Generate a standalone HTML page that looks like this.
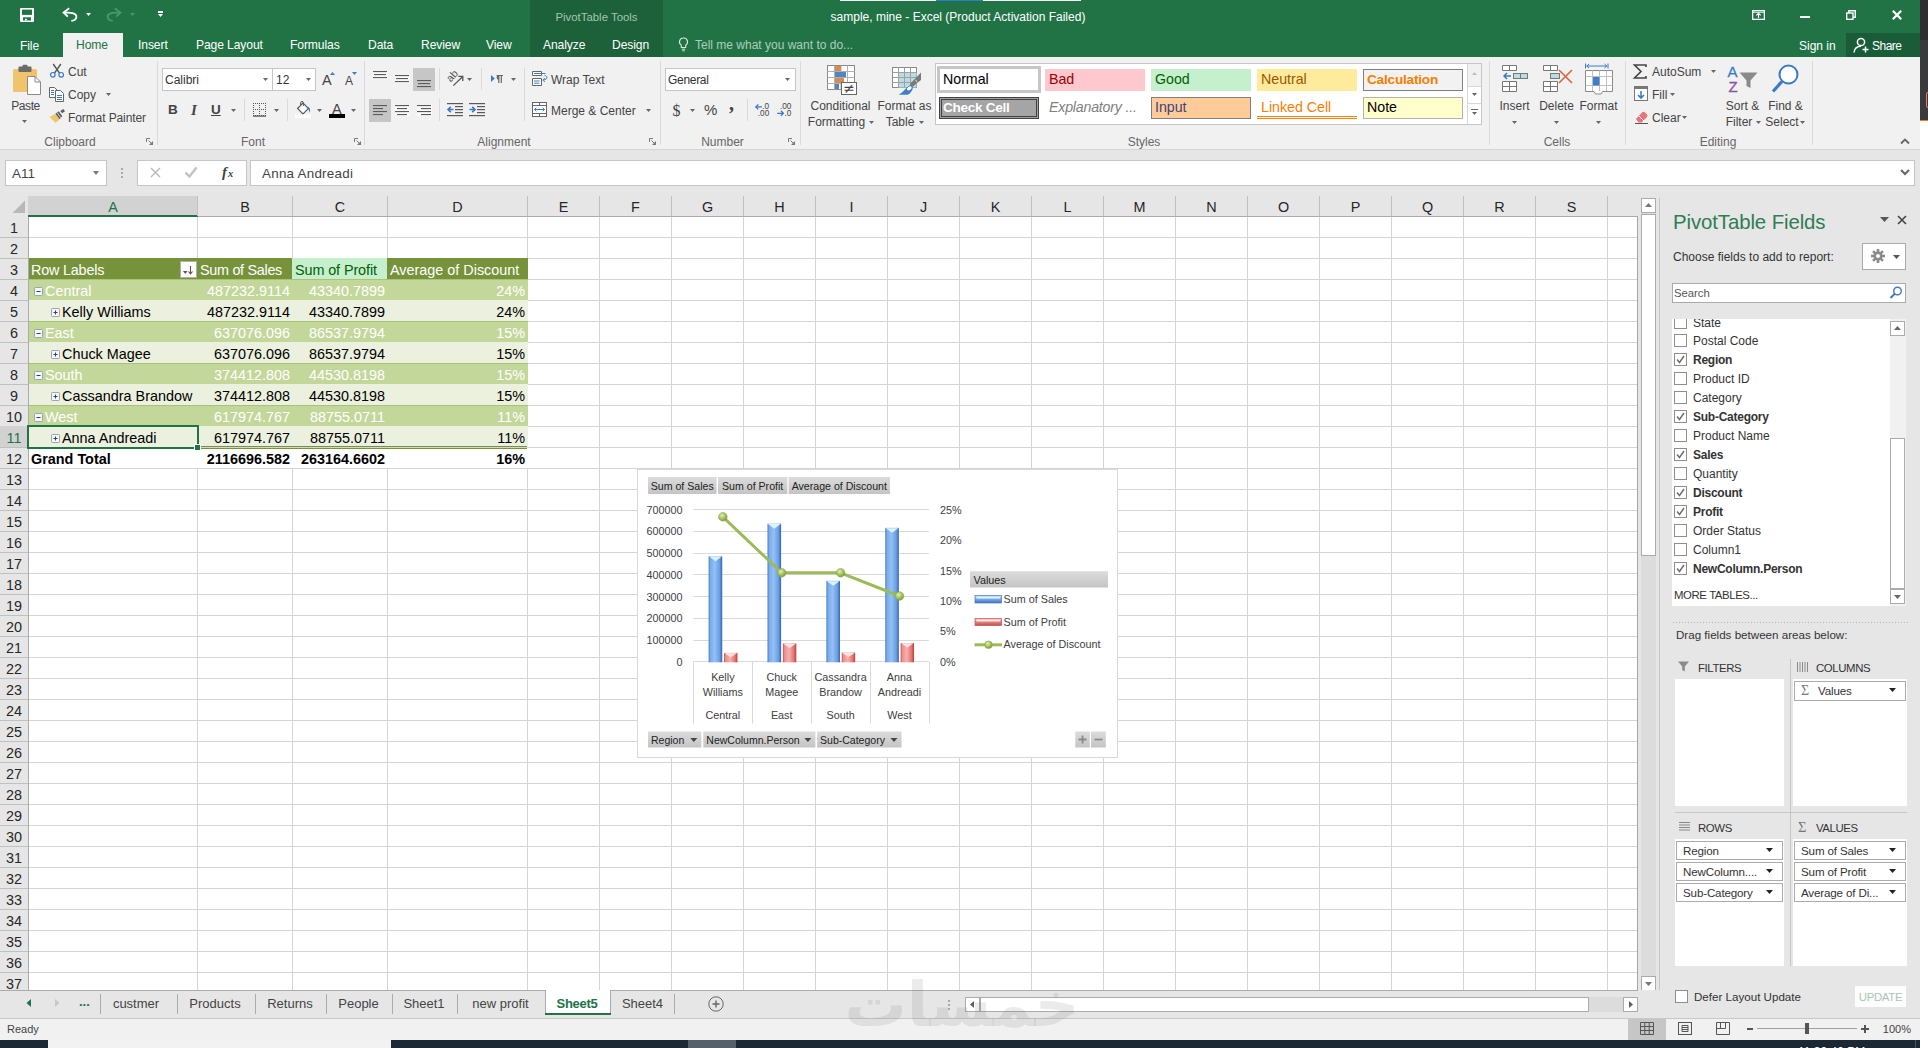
<!DOCTYPE html>
<html><head><meta charset="utf-8"><title>sample, mine - Excel</title><style>
html,body{margin:0;padding:0}
body{width:1928px;height:1048px;overflow:hidden;background:#fff;position:relative;font-family:"Liberation Sans",sans-serif}
div,svg,span.a{position:absolute;box-sizing:border-box}
svg{overflow:visible}
.t{white-space:pre;color:#444}
.c{white-space:pre;font-size:14.4px;line-height:21px;height:21px;color:#000}
.b{font-weight:bold}
</style></head><body>
<div style="left:0px;top:0px;width:1920px;height:57px;background:#217346;"></div>
<div style="left:530px;top:0px;width:133px;height:57px;background:#1c6139;"></div>
<div style="left:840px;top:0px;width:241px;height:1px;background:#f4f7f5;"></div>
<div style="left:936px;top:0px;width:47px;height:1px;background:#2b7cd3;"></div>
<div class="t" style="top:9px;font-size:11.4px;line-height:16px;color:#a3c4b0;left:530.0px;width:133px;text-align:center;">PivotTable Tools</div>
<div class="t" style="top:9px;font-size:12px;line-height:16px;color:#fff;left:758.0px;width:400px;text-align:center;">sample, mine - Excel (Product Activation Failed)</div>
<svg style="left:20px;top:8px;" width="14" height="14" viewBox="0 0 14 14"><rect x="0" y="0" width="14" height="14" rx="1" fill="#fff"/><rect x="2" y="1.600" width="10" height="5.300" fill="#217346"/><rect x="3" y="9.300" width="8" height="3.200" fill="#217346"/><rect x="5" y="10.800" width="1.800" height="1.700" fill="#fff"/></svg>
<svg style="left:62px;top:7px;" width="16" height="15" viewBox="0 0 16 15"><path d="M2.500 5.800C8 5.300 14.600 5.800 14.400 10C14.200 12.600 11.500 13.600 9.300 13.900" fill="none" stroke="#fff" stroke-width="1.900"/><path d="M7.200 1.300L1.600 5.500L5.800 9.600" fill="none" stroke="#fff" stroke-width="1.900"/></svg>
<svg style="left:86px;top:13px;" width="5" height="3" viewBox="0 0 5 3"><path d="M0 0H5L2.5 3Z" fill="#fff"/></svg>
<svg style="left:106px;top:7px;" width="16" height="15" viewBox="0 0 16 15"><path d="M13.500 5.800C8 5.300 1.400 5.800 1.600 10C1.800 12.600 4.500 13.600 6.700 13.900" fill="none" stroke="#4f9470" stroke-width="1.900"/><path d="M8.800 1.300L14.400 5.500L10.200 9.600" fill="none" stroke="#4f9470" stroke-width="1.900"/></svg>
<svg style="left:130px;top:13px;" width="5" height="3" viewBox="0 0 5 3"><path d="M0 0H5L2.5 3Z" fill="#4f9470"/></svg>
<div style="left:158px;top:11px;width:5px;height:1.5px;background:#fff;"></div>
<svg style="left:158px;top:14px;" width="5" height="3" viewBox="0 0 5 3"><path d="M0 0H5L2.5 3Z" fill="#fff"/></svg>
<svg style="left:1752px;top:10px;" width="13" height="10" viewBox="0 0 13 10"><rect x="0.650" y="0.650" width="11.700" height="8.700" fill="none" stroke="#fff" stroke-width="1.300"/><path d="M6.500 8V3.600M4.300 5.400L6.500 3.300L8.700 5.400" stroke="#fff" stroke-width="1.200" fill="none"/><rect x="1" y="1.800" width="11" height="0.900" fill="#fff"/></svg>
<div style="left:1800px;top:16px;width:10px;height:2px;background:#fff;"></div>
<svg style="left:1846px;top:10px;" width="10" height="10" viewBox="0 0 10 10"><rect x="0.700" y="3" width="6.300" height="6.300" fill="none" stroke="#fff" stroke-width="1.400"/><path d="M2.800 3V0.700H9.300V7.200H7" fill="none" stroke="#fff" stroke-width="1.400"/></svg>
<svg style="left:1892px;top:10px;" width="10" height="10" viewBox="0 0 10 10"><path d="M0.800 0.800L9.200 9.200M9.200 0.800L0.800 9.200" stroke="#fff" stroke-width="2.200"/></svg>
<div style="left:63px;top:33px;width:60px;height:24px;background:#f1f1f1;"></div>
<div class="t tab" style="top:38px;font-size:12.1px;line-height:17px;color:#fff;left:20px;letter-spacing:-0.1px;">File</div>
<div class="t tab" style="top:37.3px;font-size:12.1px;line-height:17px;color:#217346;left:76px;letter-spacing:-0.1px;">Home</div>
<div class="t tab" style="top:37.3px;font-size:12.1px;line-height:17px;color:#fff;left:138px;letter-spacing:-0.1px;">Insert</div>
<div class="t tab" style="top:37.3px;font-size:12.1px;line-height:17px;color:#fff;left:196px;letter-spacing:-0.1px;">Page Layout</div>
<div class="t tab" style="top:37.3px;font-size:12.1px;line-height:17px;color:#fff;left:290px;letter-spacing:-0.1px;">Formulas</div>
<div class="t tab" style="top:37.3px;font-size:12.1px;line-height:17px;color:#fff;left:368px;letter-spacing:-0.1px;">Data</div>
<div class="t tab" style="top:37.3px;font-size:12.1px;line-height:17px;color:#fff;left:421px;letter-spacing:-0.1px;">Review</div>
<div class="t tab" style="top:37.3px;font-size:12.1px;line-height:17px;color:#fff;left:486px;letter-spacing:-0.1px;">View</div>
<div class="t tab" style="top:37.3px;font-size:12.1px;line-height:17px;color:#fff;left:543px;letter-spacing:-0.1px;">Analyze</div>
<div class="t tab" style="top:37.3px;font-size:12.1px;line-height:17px;color:#fff;left:612px;letter-spacing:-0.1px;">Design</div>
<svg style="left:678px;top:37px;" width="11" height="15" viewBox="0 0 11 15"><path d="M5.5 1A3.9 3.9 0 0 0 3.3 8.2V10.5H7.7V8.2A3.9 3.9 0 0 0 5.5 1Z" fill="none" stroke="#d5e6dc" stroke-width="1.1"/><path d="M3.8 12.2H7.2M4.3 13.8H6.7" stroke="#d5e6dc" stroke-width="1"/></svg>
<div class="t" style="top:37.3px;font-size:12px;line-height:17px;color:#aecdbb;left:695px;">Tell me what you want to do...</div>
<div class="t" style="top:38px;font-size:12px;line-height:17px;color:#fff;left:1799px;">Sign in</div>
<div style="left:1846px;top:33px;width:74px;height:24px;background:#1a5c38;"></div>
<svg style="left:1853px;top:37px;" width="17" height="16" viewBox="0 0 17 16"><circle cx="8" cy="5" r="3.6" fill="none" stroke="#fff" stroke-width="1.5"/><path d="M1 15.5C1.5 11 4.5 9.3 8 9.3" fill="none" stroke="#fff" stroke-width="1.5"/><path d="M12.5 9.5V15.5M9.5 12.5H15.5" stroke="#fff" stroke-width="1.5"/></svg>
<div class="t" style="top:38px;font-size:12px;line-height:17px;color:#fff;left:1872px;letter-spacing:-0.500px;">Share</div>
<div style="left:0px;top:57px;width:1920px;height:93px;background:#f1f1f1;"></div>
<div style="left:0px;top:149px;width:1920px;height:1px;background:#d5d5d5;"></div>
<svg style="left:12px;top:64px;" width="30" height="32" viewBox="0 0 30 32"><rect x="1" y="5" width="24" height="23" rx="1.5" fill="#f0c36d"/><rect x="6.5" y="2.5" width="13" height="5.5" rx="1" fill="#6b6b6b"/><rect x="10.5" y="0.8" width="5" height="3.5" rx="1.2" fill="#6b6b6b"/><path d="M15.5 12.5H23L28.5 18V30.5H15.5Z" fill="#fff" stroke="#8a8a8a" stroke-width="1"/><path d="M23 12.5V18H28.5" fill="none" stroke="#8a8a8a" stroke-width="1"/></svg>
<div class="t" style="top:98px;font-size:12px;line-height:16px;color:#444;left:-4.5px;width:60px;text-align:center;letter-spacing:-0.4px;">Paste</div>
<svg style="left:22px;top:120px;" width="5" height="3" viewBox="0 0 5 3"><path d="M0 0H5L2.5 3Z" fill="#666"/></svg>
<svg style="left:49px;top:63px;" width="16" height="15" viewBox="0 0 16 15"><path d="M4.2 1L10.5 10.2M11.8 1L5.5 10.2" stroke="#555" stroke-width="1.4" fill="none"/><circle cx="3.8" cy="11.8" r="2.3" fill="none" stroke="#3a7bc8" stroke-width="1.2"/><circle cx="12.2" cy="11.8" r="2.3" fill="none" stroke="#3a7bc8" stroke-width="1.2"/></svg>
<div class="t" style="top:64px;font-size:12px;line-height:16px;color:#444;left:68px;">Cut</div>
<svg style="left:49px;top:87px;" width="16" height="15" viewBox="0 0 16 15"><path d="M0.500 0.500H5.500L8 3V10.500H0.500Z" fill="#fff" stroke="#666" stroke-width="1"/><path d="M2 3.500H5M2 5.500H5M2 7.500H5" stroke="#3a7bc8" stroke-width="1" shape-rendering="crispEdges"/><path d="M6.500 3.500H11.500L14.500 6.500V14.500H6.500Z" fill="#fff" stroke="#666" stroke-width="1"/><path d="M8 8.500H13M8 10.500H13M8 12.500H13" stroke="#3a7bc8" stroke-width="1" shape-rendering="crispEdges"/></svg>
<div class="t" style="top:87px;font-size:12px;line-height:16px;color:#444;left:68px;">Copy</div>
<svg style="left:106px;top:93px;" width="5" height="3" viewBox="0 0 5 3"><path d="M0 0H5L2.5 3Z" fill="#666"/></svg>
<svg style="left:49px;top:109px;" width="17" height="15" viewBox="0 0 17 15"><path d="M0.500 8L6 5L10.500 10.500L6.500 14Z" fill="#f0c36d"/><path d="M6.300 4.700L9.800 2.300L13.300 7.300L10.600 10.200Z" fill="#5e5e5e"/><path d="M8 3.600L12 9" stroke="#f1f1f1" stroke-width="0.800"/><path d="M11.300 2L14.300 0L16 2.200L13 4.300Z" fill="#5e5e5e"/></svg>
<div class="t" style="top:110px;font-size:12px;line-height:16px;color:#444;left:68px;letter-spacing:-0.1px;">Format Painter</div>
<div class="t" style="top:134px;font-size:12px;line-height:16px;color:#666;left:20.0px;width:100px;text-align:center;">Clipboard</div>
<svg style="left:146px;top:138px;" width="7" height="7" viewBox="0 0 7 7"><path d="M0.500 4V0.500H4" fill="none" stroke="#777" stroke-width="1"/><path d="M2.500 2.500L5.500 5.500" fill="none" stroke="#777" stroke-width="1"/><path d="M7 3V7H3Z" fill="#777"/></svg>
<div style="left:157px;top:61px;width:1px;height:84px;background:#dadada;"></div>
<div style="left:162px;top:68px;width:111px;height:23px;background:#fff;border:1px solid #c6c6c6;"></div>
<div style="left:272px;top:68px;width:44px;height:23px;background:#fff;border:1px solid #c6c6c6;"></div>
<div class="t" style="top:72px;font-size:12px;line-height:16px;color:#333;left:165px;">Calibri</div>
<svg style="left:263px;top:78px;" width="5" height="3" viewBox="0 0 5 3"><path d="M0 0H5L2.5 3Z" fill="#666"/></svg>
<div class="t" style="top:72px;font-size:12px;line-height:16px;color:#333;left:276px;">12</div>
<svg style="left:306px;top:78px;" width="5" height="3" viewBox="0 0 5 3"><path d="M0 0H5L2.5 3Z" fill="#666"/></svg>
<div class="t" style="top:71px;font-size:14.5px;line-height:18px;color:#444;left:322px;">A</div>
<svg style="left:330px;top:72px;" width="5" height="3" viewBox="0 0 5 3"><path d="M0 3H5L2.5 0Z" fill="#3a7bc8"/></svg>
<div class="t" style="top:73px;font-size:12px;line-height:16px;color:#444;left:345px;">A</div>
<svg style="left:352px;top:72px;" width="5" height="3" viewBox="0 0 5 3"><path d="M0 0H5L2.5 3Z" fill="#3a7bc8"/></svg>
<div class="t" style="top:101px;font-size:13.5px;line-height:18px;color:#444;left:168px;font-weight:bold;">B</div>
<div class="t" style="top:101px;font-size:13.5px;line-height:18px;color:#444;left:191px;font-style:italic;font-weight:bold;font-family:'Liberation Serif',serif;font-size:15px;">I</div>
<div class="t" style="top:101px;font-size:13.5px;line-height:18px;color:#444;left:211px;font-weight:bold;text-decoration:underline;">U</div>
<svg style="left:231px;top:109px;" width="5" height="3" viewBox="0 0 5 3"><path d="M0 0H5L2.5 3Z" fill="#666"/></svg>
<div style="left:244px;top:99px;width:1px;height:22px;background:#dadada;"></div>
<svg style="left:253px;top:103px;" width="13" height="14" viewBox="0 0 13 14"><g fill="#555" shape-rendering="crispEdges"><rect x="0" y="0" width="1" height="1"/><rect x="0" y="6" width="1" height="1"/><rect x="0" y="12" width="1" height="1"/><rect x="2" y="0" width="1" height="1"/><rect x="0" y="2" width="1" height="1"/><rect x="2" y="6" width="1" height="1"/><rect x="6" y="2" width="1" height="1"/><rect x="2" y="12" width="1" height="1"/><rect x="12" y="2" width="1" height="1"/><rect x="4" y="0" width="1" height="1"/><rect x="0" y="4" width="1" height="1"/><rect x="4" y="6" width="1" height="1"/><rect x="6" y="4" width="1" height="1"/><rect x="4" y="12" width="1" height="1"/><rect x="12" y="4" width="1" height="1"/><rect x="6" y="0" width="1" height="1"/><rect x="6" y="6" width="1" height="1"/><rect x="6" y="12" width="1" height="1"/><rect x="8" y="0" width="1" height="1"/><rect x="0" y="8" width="1" height="1"/><rect x="8" y="6" width="1" height="1"/><rect x="6" y="8" width="1" height="1"/><rect x="8" y="12" width="1" height="1"/><rect x="12" y="8" width="1" height="1"/><rect x="10" y="0" width="1" height="1"/><rect x="0" y="10" width="1" height="1"/><rect x="10" y="6" width="1" height="1"/><rect x="6" y="10" width="1" height="1"/><rect x="10" y="12" width="1" height="1"/><rect x="12" y="10" width="1" height="1"/><rect x="12" y="0" width="1" height="1"/><rect x="12" y="6" width="1" height="1"/><rect x="12" y="12" width="1" height="1"/></g><rect x="0" y="12.500" width="13" height="1.200" fill="#555"/></svg>
<svg style="left:274px;top:109px;" width="5" height="3" viewBox="0 0 5 3"><path d="M0 0H5L2.5 3Z" fill="#666"/></svg>
<div style="left:287px;top:99px;width:1px;height:22px;background:#dadada;"></div>
<svg style="left:295px;top:101px;" width="17" height="18" viewBox="0 0 17 18"><path d="M2.500 7.500L8 2L13.500 7.500L8 13Z" fill="#fff" stroke="#555" stroke-width="1.100"/><path d="M8.300 5V1.800A1.300 1.300 0 0 0 5.700 1.800V4" fill="none" stroke="#555" stroke-width="1"/><path d="M12.800 5.500C15.500 7 15.800 10 14 11.800C14.500 10 14 8.500 12.300 7.200Z" fill="#3a7bc8"/><rect x="0" y="13.500" width="16" height="3.800" fill="#fff"/></svg>
<svg style="left:317px;top:109px;" width="5" height="3" viewBox="0 0 5 3"><path d="M0 0H5L2.5 3Z" fill="#666"/></svg>
<div class="t" style="top:100px;font-size:14.5px;line-height:18px;color:#444;left:332px;font-weight:normal;">A</div>
<div style="left:329px;top:114px;width:16px;height:4px;background:#000;"></div>
<svg style="left:351px;top:109px;" width="5" height="3" viewBox="0 0 5 3"><path d="M0 0H5L2.5 3Z" fill="#666"/></svg>
<div class="t" style="top:134px;font-size:12px;line-height:16px;color:#666;left:203.0px;width:100px;text-align:center;">Font</div>
<svg style="left:354px;top:138px;" width="7" height="7" viewBox="0 0 7 7"><path d="M0.500 4V0.500H4" fill="none" stroke="#777" stroke-width="1"/><path d="M2.500 2.500L5.500 5.500" fill="none" stroke="#777" stroke-width="1"/><path d="M7 3V7H3Z" fill="#777"/></svg>
<div style="left:364px;top:61px;width:1px;height:84px;background:#dadada;"></div>
<div style="left:413px;top:68px;width:22px;height:23px;background:#c6c6c6;"></div>
<div style="left:369px;top:99px;width:22px;height:23px;background:#c6c6c6;"></div>
<div style="left:372.5px;top:70.5px;width:15px;height:8px;background:#f9f9f9;"></div>
<div style="left:394.5px;top:74.5px;width:15px;height:8px;background:#f9f9f9;"></div>
<div style="left:394.5px;top:104.5px;width:15px;height:11px;background:#f9f9f9;"></div>
<div style="left:416.5px;top:104.5px;width:15px;height:11px;background:#f9f9f9;"></div>
<svg style="left:373px;top:70px;" width="14" height="20" viewBox="0 0 14 20"><rect x="0.0" y="1" width="14" height="1.1" fill="#5a5a5a"/><rect x="1.0" y="4" width="12" height="1.1" fill="#5a5a5a"/><rect x="0.0" y="7" width="14" height="1.1" fill="#5a5a5a"/></svg>
<svg style="left:395px;top:70px;" width="14" height="20" viewBox="0 0 14 20"><rect x="0.0" y="5" width="14" height="1.1" fill="#5a5a5a"/><rect x="1.0" y="8" width="12" height="1.1" fill="#5a5a5a"/><rect x="0.0" y="11" width="14" height="1.1" fill="#5a5a5a"/></svg>
<svg style="left:417px;top:70px;" width="14" height="20" viewBox="0 0 14 20"><rect x="0.0" y="10" width="14" height="1.1" fill="#5a5a5a"/><rect x="1.0" y="13" width="12" height="1.1" fill="#5a5a5a"/><rect x="0.0" y="16" width="14" height="1.1" fill="#5a5a5a"/></svg>
<svg style="left:373px;top:103px;" width="14" height="16" viewBox="0 0 14 16"><rect x="0" y="2" width="14" height="1.1" fill="#5a5a5a"/><rect x="0" y="5" width="10" height="1.1" fill="#5a5a5a"/><rect x="0" y="8" width="14" height="1.1" fill="#5a5a5a"/><rect x="0" y="11" width="10" height="1.1" fill="#5a5a5a"/></svg>
<svg style="left:395px;top:103px;" width="14" height="16" viewBox="0 0 14 16"><rect x="0.0" y="2" width="14" height="1.1" fill="#5a5a5a"/><rect x="2.0" y="5" width="10" height="1.1" fill="#5a5a5a"/><rect x="0.0" y="8" width="14" height="1.1" fill="#5a5a5a"/><rect x="2.0" y="11" width="10" height="1.1" fill="#5a5a5a"/></svg>
<svg style="left:417px;top:103px;" width="14" height="16" viewBox="0 0 14 16"><rect x="0" y="2" width="14" height="1.1" fill="#5a5a5a"/><rect x="4" y="5" width="10" height="1.1" fill="#5a5a5a"/><rect x="0" y="8" width="14" height="1.1" fill="#5a5a5a"/><rect x="4" y="11" width="10" height="1.1" fill="#5a5a5a"/></svg>
<div style="left:439px;top:68px;width:1px;height:22px;background:#dadada;"></div>
<div style="left:439px;top:99px;width:1px;height:22px;background:#dadada;"></div>
<svg style="left:446px;top:70px;" width="18" height="18" viewBox="0 0 18 18"><path d="M7.300 15.600L16.500 6.700" stroke="#555" stroke-width="1.300"/><path d="M12.300 6.400H16.800V10.900" fill="none" stroke="#555" stroke-width="1.300"/><text x="0" y="0" transform="translate(4.800,12.500) rotate(-48)" font-size="10.500" fill="#555" font-family="Liberation Sans, sans-serif">ab</text></svg>
<svg style="left:467px;top:78px;" width="5" height="3" viewBox="0 0 5 3"><path d="M0 0H5L2.5 3Z" fill="#666"/></svg>
<div style="left:481px;top:68px;width:1px;height:22px;background:#dadada;"></div>
<svg style="left:490px;top:72px;" width="14" height="13" viewBox="0 0 14 13"><path d="M1 3L4.800 6.500L1 10Z" fill="#3a7bc8"/><path d="M8.800 3.500V11M11.300 3.500V11M6.500 3.500H13" stroke="#666" stroke-width="1.200" fill="none"/><path d="M9 3A2.400 2.400 0 0 0 9 7.800Z" fill="#666"/></svg>
<svg style="left:511px;top:78px;" width="5" height="3" viewBox="0 0 5 3"><path d="M0 0H5L2.5 3Z" fill="#666"/></svg>
<svg style="left:447px;top:103px;" width="16" height="14" viewBox="0 0 16 14"><rect x="0" y="0.0" width="16" height="1.2" fill="#5a5a5a"/><rect x="8" y="3" width="8" height="1.2" fill="#5a5a5a"/><rect x="8" y="6" width="8" height="1.2" fill="#5a5a5a"/><rect x="8" y="9" width="8" height="1.2" fill="#5a5a5a"/><rect x="0" y="12.0" width="16" height="1.2" fill="#5a5a5a"/><path d="M6.500 6.500H1M3.800 3.800L1 6.500L3.800 9.200" stroke="#3a7bc8" stroke-width="1.600" fill="none"/></svg>
<svg style="left:469px;top:103px;" width="16" height="14" viewBox="0 0 16 14"><rect x="0" y="0.0" width="16" height="1.2" fill="#5a5a5a"/><rect x="8" y="3" width="8" height="1.2" fill="#5a5a5a"/><rect x="8" y="6" width="8" height="1.2" fill="#5a5a5a"/><rect x="8" y="9" width="8" height="1.2" fill="#5a5a5a"/><rect x="0" y="12.0" width="16" height="1.2" fill="#5a5a5a"/><path d="M0.500 6.500H6M3.200 3.800L6 6.500L3.200 9.200" stroke="#3a7bc8" stroke-width="1.600" fill="none"/></svg>
<div style="left:524px;top:68px;width:1px;height:53px;background:#dadada;"></div>
<svg style="left:532px;top:71px;" width="16" height="15" viewBox="0 0 16 15"><path d="M0.500 0.500H9.500V4.500H0.500ZM0.500 7.500H9.500V14.500H0.500Z" fill="#fff" stroke="#666" stroke-width="1"/><path d="M2 2.500H13.500M2 10H7.500M2 12.200H7.500" fill="none" stroke="#3a7bc8" stroke-width="1"/><path d="M12.500 4.500C16 4.800 15.800 9 11.300 9" fill="none" stroke="#3a7bc8" stroke-width="1"/><path d="M12.800 7L10.800 9L12.800 11" fill="none" stroke="#3a7bc8" stroke-width="1"/></svg>
<div class="t" style="top:72px;font-size:12px;line-height:16px;color:#444;left:551px;">Wrap Text</div>
<svg style="left:532px;top:102px;" width="15" height="15" viewBox="0 0 15 15"><rect x="0.500" y="0.500" width="14" height="14" fill="#fff" stroke="#666"/><path d="M0.500 3.500H14.500M0.500 11.500H14.500M7.500 0.500V3.500M7.500 11.500V14.500" stroke="#666" stroke-width="1"/><path d="M2.500 7.500H12.500M4.300 5.800L2.500 7.500L4.300 9.200M10.700 5.800L12.500 7.500L10.700 9.200" fill="none" stroke="#3a7bc8" stroke-width="1"/></svg>
<div class="t" style="top:103px;font-size:12px;line-height:16px;color:#444;left:551px;">Merge &amp; Center</div>
<svg style="left:646px;top:109px;" width="5" height="3" viewBox="0 0 5 3"><path d="M0 0H5L2.5 3Z" fill="#666"/></svg>
<div class="t" style="top:134px;font-size:12px;line-height:16px;color:#666;left:454.0px;width:100px;text-align:center;">Alignment</div>
<svg style="left:649px;top:138px;" width="7" height="7" viewBox="0 0 7 7"><path d="M0.500 4V0.500H4" fill="none" stroke="#777" stroke-width="1"/><path d="M2.500 2.500L5.500 5.500" fill="none" stroke="#777" stroke-width="1"/><path d="M7 3V7H3Z" fill="#777"/></svg>
<div style="left:660px;top:61px;width:1px;height:84px;background:#dadada;"></div>
<div style="left:665px;top:68px;width:131px;height:23px;background:#fff;border:1px solid #c6c6c6;"></div>
<div class="t" style="top:72px;font-size:12px;line-height:16px;color:#333;left:668px;letter-spacing:-0.3px;">General</div>
<svg style="left:785px;top:78px;" width="5" height="3" viewBox="0 0 5 3"><path d="M0 0H5L2.5 3Z" fill="#666"/></svg>
<div class="t" style="top:100.7px;font-size:15px;line-height:20px;color:#444;left:672.5px;font-family:'Liberation Serif',serif;font-size:16px;">$</div>
<svg style="left:690px;top:109px;" width="5" height="3" viewBox="0 0 5 3"><path d="M0 0H5L2.5 3Z" fill="#666"/></svg>
<div class="t" style="top:100px;font-size:15px;line-height:20px;color:#444;left:704px;">%</div>
<div class="t" style="top:91.5px;font-size:20px;line-height:22px;color:#444;left:729px;font-weight:bold;font-family:'Liberation Serif',serif;">,</div>
<div style="left:747px;top:99px;width:1px;height:22px;background:#dadada;"></div>
<svg style="left:755px;top:103px;" width="15" height="15" viewBox="0 0 15 15"><path d="M7 3.900H0.800M3.300 1.400L0.800 3.900L3.300 6.400" fill="none" stroke="#3a7bc8" stroke-width="1.300"/><text x="14.200" y="5.800" font-size="8.200" fill="#444" font-family="Liberation Sans, sans-serif" text-anchor="end">.0</text><text x="14.200" y="12.900" font-size="8.200" fill="#444" font-family="Liberation Sans, sans-serif" text-anchor="end">.00</text></svg>
<svg style="left:776px;top:103px;" width="15" height="15" viewBox="0 0 15 15"><text x="15.300" y="5.800" font-size="8.200" fill="#444" font-family="Liberation Sans, sans-serif" text-anchor="end">.00</text><path d="M1.200 10.300H7.400M4.900 7.800L7.400 10.300L4.900 12.800" fill="none" stroke="#3a7bc8" stroke-width="1.300"/><text x="15.300" y="12.900" font-size="8.200" fill="#444" font-family="Liberation Sans, sans-serif" text-anchor="end">.0</text></svg>
<div class="t" style="top:134px;font-size:12px;line-height:16px;color:#666;left:672.5px;width:100px;text-align:center;">Number</div>
<svg style="left:788px;top:138px;" width="7" height="7" viewBox="0 0 7 7"><path d="M0.500 4V0.500H4" fill="none" stroke="#777" stroke-width="1"/><path d="M2.500 2.500L5.500 5.500" fill="none" stroke="#777" stroke-width="1"/><path d="M7 3V7H3Z" fill="#777"/></svg>
<div style="left:800px;top:61px;width:1px;height:84px;background:#dadada;"></div>
<svg style="left:827px;top:65px;" width="30" height="30" viewBox="0 0 30 30"><rect x="0.5" y="0.5" width="27" height="24" fill="#fff" stroke="#8a8a8a"/><path d="M7.5 0.5V24.5M14 0.5V24.5M20.5 0.5V24.5M0.5 6.5H27.5M0.5 12.5H27.5M0.5 18.5H27.5" stroke="#b0b0b0" stroke-width="1"/><rect x="8" y="1" width="6" height="5" fill="#d98a4e"/><rect x="8" y="7" width="11" height="5" fill="#4a86c8"/><rect x="8" y="13" width="9" height="5" fill="#d98a4e"/><rect x="8" y="19" width="4" height="5" fill="#4a86c8"/><rect x="14.5" y="17.5" width="15" height="12" fill="#fff" stroke="#666"/><text x="22" y="28.300" font-size="14" text-anchor="middle" fill="#444" font-family="DejaVu Sans, sans-serif">≠</text></svg>
<div class="t" style="top:98px;font-size:12px;line-height:16px;color:#444;left:795.5px;width:90px;text-align:center;">Conditional</div>
<div class="t" style="top:114px;font-size:12px;line-height:16px;color:#444;left:791.5px;width:90px;text-align:center;">Formatting</div>
<svg style="left:869px;top:121px;" width="5" height="3" viewBox="0 0 5 3"><path d="M0 0H5L2.5 3Z" fill="#666"/></svg>
<svg style="left:892px;top:67px;" width="30" height="28" viewBox="0 0 30 28"><rect x="0.5" y="0.5" width="24" height="20" fill="#fff" stroke="#8a8a8a"/><rect x="6.5" y="5.5" width="18" height="15" fill="#b7dde3"/><path d="M6.5 0.5V20.5M12.5 0.5V20.5M18.5 0.5V20.5M0.5 5.5H24.5M0.5 10.5H24.5M0.5 15.5H24.5" stroke="#a0a0a0" stroke-width="1"/><path d="M29 5.500V13L20.300 20L17.800 17.300Z" fill="#7a7a7a"/><path d="M23.300 12.800L25.300 15.300" stroke="#f1f1f1" stroke-width="0.800"/><path d="M17.800 18.300C20 18 21.500 20 20.500 22.500C19.500 25 17 27.700 15.500 27.700H6.700C11 25.500 13.500 21 17.800 18.300Z" fill="#3f7fca"/><ellipse cx="17.300" cy="21.300" rx="2.600" ry="1.700" fill="#fff" transform="rotate(-35 17.300 21.300)"/></svg>
<div class="t" style="top:98px;font-size:12px;line-height:16px;color:#444;left:859.5px;width:90px;text-align:center;">Format as</div>
<div class="t" style="top:114px;font-size:12px;line-height:16px;color:#444;left:855.0px;width:90px;text-align:center;">Table</div>
<svg style="left:919px;top:121px;" width="5" height="3" viewBox="0 0 5 3"><path d="M0 0H5L2.5 3Z" fill="#666"/></svg>
<div style="left:935px;top:63px;width:547px;height:62px;background:#fff;border:1px solid #c6c6c6;"></div>
<div style="left:1467px;top:64px;width:1px;height:60px;background:#d8d8d8;"></div>
<div style="left:1468px;top:64px;width:13px;height:22px;background:#f1f1f1;"></div>
<svg style="left:1472px;top:72px;" width="5" height="3" viewBox="0 0 5 3"><path d="M0 3H5L2.5 0Z" fill="#c0c0c0"/></svg>
<div style="left:1468px;top:86px;width:13px;height:1px;background:#d8d8d8;"></div>
<svg style="left:1472px;top:93px;" width="5" height="3" viewBox="0 0 5 3"><path d="M0 0H5L2.5 3Z" fill="#666"/></svg>
<div style="left:1468px;top:103px;width:13px;height:1px;background:#d8d8d8;"></div>
<div style="left:1471px;top:109px;width:7px;height:1px;background:#666;"></div>
<svg style="left:1472px;top:112px;" width="5" height="3" viewBox="0 0 5 3"><path d="M0 0H5L2.5 3Z" fill="#666"/></svg>
<div style="left:937px;top:66px;width:104px;height:27px;background:#fff;border:3px solid #c6c6c6;"></div>
<div class="t" style="top:70px;font-size:14.2px;line-height:18px;color:#000;left:943px;">Normal</div>
<div style="left:1045px;top:69px;width:100px;height:22px;background:#ffc7ce;"></div>
<div class="t" style="top:70px;font-size:14.2px;line-height:18px;color:#9c0006;left:1049px;">Bad</div>
<div style="left:1151px;top:69px;width:100px;height:22px;background:#c6efce;"></div>
<div class="t" style="top:70px;font-size:14.2px;line-height:18px;color:#006100;left:1155px;">Good</div>
<div style="left:1257px;top:69px;width:100px;height:22px;background:#ffeb9c;"></div>
<div class="t" style="top:70px;font-size:14.2px;line-height:18px;color:#9c5700;left:1261px;">Neutral</div>
<div style="left:1363px;top:69px;width:100px;height:22px;background:#f2f2f2;border:1px solid #7f7f7f;"></div>
<div class="t" style="top:71px;font-size:13.6px;line-height:18px;color:#fa7d00;left:1367px;font-weight:bold;letter-spacing:-0.2px;">Calculation</div>
<div style="left:939px;top:97px;width:100px;height:22px;background:#a5a5a5;border:3px double #3f3f3f;"></div>
<div class="t" style="top:99px;font-size:13.6px;line-height:18px;color:#fff;left:943px;font-weight:bold;letter-spacing:-0.3px;">Check Cell</div>
<div class="t" style="top:98px;font-size:14.2px;line-height:18px;color:#7f7f7f;left:1049px;font-style:italic;letter-spacing:-0.2px;">Explanatory ...</div>
<div style="left:1151px;top:97px;width:100px;height:22px;background:#ffcc99;border:1px solid #7f7f7f;"></div>
<div class="t" style="top:98px;font-size:14.2px;line-height:18px;color:#3f3f76;left:1155px;">Input</div>
<div class="t" style="top:98px;font-size:14.2px;line-height:18px;color:#fa7d00;left:1261px;">Linked Cell</div>
<div style="left:1257px;top:116px;width:100px;height:3px;border-top:1px solid #ff8001;border-bottom:1px solid #ff8001;"></div>
<div style="left:1363px;top:97px;width:100px;height:22px;background:#ffffcc;border:1px solid #b2b2b2;"></div>
<div class="t" style="top:98px;font-size:14.2px;line-height:18px;color:#000;left:1367px;">Note</div>
<div class="t" style="top:134px;font-size:12px;line-height:16px;color:#666;left:1094.0px;width:100px;text-align:center;">Styles</div>
<div style="left:1489px;top:61px;width:1px;height:84px;background:#dadada;"></div>
<svg style="left:1502px;top:65px;" width="27" height="28" viewBox="0 0 27 28"><path d="M0.5 0.5H14.5V5.5H0.5ZM7.5 0.5V5.5" fill="#fff" stroke="#777"/><path d="M0.5 16.5H14.5V26.5H0.5ZM7.5 16.5V26.5M0.5 21.5H14.5" fill="#fff" stroke="#777"/><rect x="11.5" y="8.5" width="14" height="5" fill="#b7dde3" stroke="#777"/><path d="M18.5 8.5V13.5" stroke="#777"/><path d="M9 11H2M5 8L2 11L5 14" fill="none" stroke="#3a7bc8" stroke-width="1.5"/></svg>
<div class="t" style="top:98px;font-size:12px;line-height:16px;color:#444;left:1484.5px;width:60px;text-align:center;">Insert</div>
<svg style="left:1512px;top:121px;" width="5" height="3" viewBox="0 0 5 3"><path d="M0 0H5L2.5 3Z" fill="#666"/></svg>
<svg style="left:1543px;top:65px;" width="30" height="28" viewBox="0 0 30 28"><path d="M0.5 0.5H14.5V5.5H0.5ZM7.5 0.5V5.5" fill="#fff" stroke="#777"/><path d="M0.5 16.5H14.5V26.5H0.5ZM7.5 16.5V26.5M0.5 21.5H14.5" fill="#fff" stroke="#777"/><rect x="7.5" y="8.5" width="9" height="5" fill="#b7dde3" stroke="#777"/><path d="M16 5L29 18M29 5L16 18" fill="none" stroke="#d9663a" stroke-width="1.6"/></svg>
<div class="t" style="top:98px;font-size:12px;line-height:16px;color:#444;left:1526.5px;width:60px;text-align:center;">Delete</div>
<svg style="left:1554px;top:121px;" width="5" height="3" viewBox="0 0 5 3"><path d="M0 0H5L2.5 3Z" fill="#666"/></svg>
<svg style="left:1584px;top:63px;" width="30" height="32" viewBox="0 0 30 32"><path d="M1.500 0.500V5.500M24 0.500V5.500M2.500 3H23M5 1L2.800 3L5 5M20.500 1L22.700 3L20.500 5" fill="none" stroke="#3a7bc8" stroke-width="1"/><path d="M1.500 7.500H28.500V28.500H18.500L17 31H11.500L10 28.500H1.500Z" fill="#fff" stroke="#8a8a8a"/><path d="M8.500 7.500V28M15.500 7.500V28M22.500 7.500V28M1.500 13.500H28.500M1.500 22.500H28.500" stroke="#c0c0c0"/><rect x="9" y="14" width="6.500" height="8.500" fill="#3f7fca"/></svg>
<div class="t" style="top:98px;font-size:12px;line-height:16px;color:#444;left:1568.5px;width:60px;text-align:center;">Format</div>
<svg style="left:1596px;top:121px;" width="5" height="3" viewBox="0 0 5 3"><path d="M0 0H5L2.5 3Z" fill="#666"/></svg>
<div class="t" style="top:134px;font-size:12px;line-height:16px;color:#666;left:1507.0px;width:100px;text-align:center;">Cells</div>
<div style="left:1625px;top:61px;width:1px;height:84px;background:#dadada;"></div>
<svg style="left:1633px;top:64px;" width="14" height="15" viewBox="0 0 14 15"><path d="M13 3V1H1.5L8 7.5L1.5 14H13V12" fill="none" stroke="#444" stroke-width="1.6"/></svg>
<div class="t" style="top:64px;font-size:12px;line-height:16px;color:#444;left:1652px;">AutoSum</div>
<svg style="left:1711px;top:70px;" width="5" height="3" viewBox="0 0 5 3"><path d="M0 0H5L2.5 3Z" fill="#666"/></svg>
<svg style="left:1634px;top:86px;" width="14" height="16" viewBox="0 0 14 16"><rect x="0.5" y="0.5" width="13" height="14" fill="#fff" stroke="#777"/><rect x="0.5" y="0.5" width="13" height="2.5" fill="#777"/><path d="M7 5V12M4 9L7 12L10 9" fill="none" stroke="#3a7bc8" stroke-width="1.6"/></svg>
<div class="t" style="top:87px;font-size:12px;line-height:16px;color:#444;left:1652px;">Fill</div>
<svg style="left:1670px;top:93px;" width="5" height="3" viewBox="0 0 5 3"><path d="M0 0H5L2.5 3Z" fill="#666"/></svg>
<svg style="left:1634px;top:110px;" width="15" height="14" viewBox="0 0 15 14"><path d="M2 9L8 2.500A2 2 0 0 1 11 2.5L13 4.5A2 2 0 0 1 13 7L7.500 12.500H4.500Z" fill="#e8737b"/><path d="M5 6L10 11" stroke="#fff" stroke-width="1"/><path d="M1 13.5H14" stroke="#555" stroke-width="1"/></svg>
<div class="t" style="top:110px;font-size:12px;line-height:16px;color:#444;left:1652px;">Clear</div>
<svg style="left:1682px;top:116px;" width="5" height="3" viewBox="0 0 5 3"><path d="M0 0H5L2.5 3Z" fill="#666"/></svg>
<svg style="left:1727px;top:64px;" width="32" height="30" viewBox="0 0 32 30"><text x="0.500" y="12.500" font-size="15" fill="#3a7bc8" stroke="#3a7bc8" stroke-width="0.300" font-family="Liberation Sans, sans-serif">A</text><text x="1.500" y="27.500" font-size="15" fill="#8d4fa5" stroke="#8d4fa5" stroke-width="0.300" font-family="Liberation Sans, sans-serif">Z</text><path d="M12.500 8.500H30.500L23.500 16.500V24L19.500 22V16.500Z" fill="#8a8a8a"/></svg>
<div class="t" style="top:98px;font-size:12px;line-height:16px;color:#444;left:1712.5px;width:60px;text-align:center;">Sort &amp;</div>
<div class="t" style="top:114px;font-size:12px;line-height:16px;color:#444;left:1709.0px;width:60px;text-align:center;">Filter</div>
<svg style="left:1756px;top:121px;" width="5" height="3" viewBox="0 0 5 3"><path d="M0 0H5L2.5 3Z" fill="#666"/></svg>
<svg style="left:1771px;top:64px;" width="30" height="30" viewBox="0 0 30 30"><circle cx="17.500" cy="10.500" r="9" fill="#fff" stroke="#3a7bc8" stroke-width="2"/><path d="M11 17.500L2 27.500" stroke="#3a7bc8" stroke-width="3.200"/></svg>
<div class="t" style="top:98px;font-size:12px;line-height:16px;color:#444;left:1755.5px;width:60px;text-align:center;">Find &amp;</div>
<div class="t" style="top:114px;font-size:12px;line-height:16px;color:#444;left:1752.0px;width:60px;text-align:center;">Select</div>
<svg style="left:1800px;top:121px;" width="5" height="3" viewBox="0 0 5 3"><path d="M0 0H5L2.5 3Z" fill="#666"/></svg>
<div class="t" style="top:134px;font-size:12px;line-height:16px;color:#666;left:1668.0px;width:100px;text-align:center;">Editing</div>
<div style="left:1812px;top:61px;width:1px;height:84px;background:#dadada;"></div>
<svg style="left:1900px;top:138px;" width="10" height="6" viewBox="0 0 10 6"><path d="M1 5.500L5 1.500L9 5.500" fill="none" stroke="#666" stroke-width="1.800"/></svg>
<div style="left:0px;top:150px;width:1920px;height:46px;background:#e6e6e6;"></div>
<div style="left:5px;top:160px;width:102px;height:26px;background:#fff;border:1px solid #c6c6c6;"></div>
<div class="t" style="top:165px;font-size:13.4px;line-height:17px;color:#444;left:12px;">A11</div>
<svg style="left:93px;top:171px;" width="6" height="4" viewBox="0 0 6 4"><path d="M0 0H6L3.0 4Z" fill="#777"/></svg>
<div style="left:121px;top:168px;width:1.5px;height:1.5px;background:#aaa;"></div>
<div style="left:121px;top:172px;width:1.5px;height:1.5px;background:#aaa;"></div>
<div style="left:121px;top:176px;width:1.5px;height:1.5px;background:#aaa;"></div>
<div style="left:137px;top:160px;width:110px;height:26px;background:#fff;border:1px solid #c6c6c6;"></div>
<svg style="left:150px;top:167px;" width="11" height="11" viewBox="0 0 11 11"><path d="M1 1L10 10M10 1L1 10" stroke="#b8b8b8" stroke-width="1.400"/></svg>
<svg style="left:184px;top:166px;" width="14" height="12" viewBox="0 0 14 12"><path d="M1.500 6.500L5.500 10.500L12.500 1.500" fill="none" stroke="#c2c2c2" stroke-width="2.400"/></svg>
<div class="t" style="top:162px;font-size:15px;line-height:20px;color:#444;left:222px;font-family:'Liberation Serif',serif;font-weight:bold;"><i>f</i></div>
<div class="t" style="top:167px;font-size:10.5px;line-height:14px;color:#444;left:228px;font-family:'Liberation Serif',serif;font-weight:bold;"><i>x</i></div>
<div style="left:250px;top:160px;width:1665px;height:26px;background:#fff;border:1px solid #c6c6c6;"></div>
<div class="t" style="top:165px;font-size:13.4px;line-height:17px;color:#444;left:262px;letter-spacing:0.25px;">Anna Andreadi</div>
<svg style="left:1900px;top:169px;" width="10" height="7" viewBox="0 0 10 7"><path d="M1 1L5 5L9 1" fill="none" stroke="#666" stroke-width="2"/></svg>
<div style="left:0px;top:196px;width:1660px;height:794px;background:#e6e6e6;"></div>
<div style="left:29px;top:217px;width:1609px;height:773px;background:#fff;"></div>
<div style="left:197px;top:217px;width:1px;height:773px;background:#d4d4d4;"></div>
<div style="left:292px;top:217px;width:1px;height:773px;background:#d4d4d4;"></div>
<div style="left:387px;top:217px;width:1px;height:773px;background:#d4d4d4;"></div>
<div style="left:527px;top:217px;width:1px;height:773px;background:#d4d4d4;"></div>
<div style="left:599px;top:217px;width:1px;height:773px;background:#d4d4d4;"></div>
<div style="left:671px;top:217px;width:1px;height:773px;background:#d4d4d4;"></div>
<div style="left:743px;top:217px;width:1px;height:773px;background:#d4d4d4;"></div>
<div style="left:815px;top:217px;width:1px;height:773px;background:#d4d4d4;"></div>
<div style="left:887px;top:217px;width:1px;height:773px;background:#d4d4d4;"></div>
<div style="left:959px;top:217px;width:1px;height:773px;background:#d4d4d4;"></div>
<div style="left:1031px;top:217px;width:1px;height:773px;background:#d4d4d4;"></div>
<div style="left:1103px;top:217px;width:1px;height:773px;background:#d4d4d4;"></div>
<div style="left:1175px;top:217px;width:1px;height:773px;background:#d4d4d4;"></div>
<div style="left:1247px;top:217px;width:1px;height:773px;background:#d4d4d4;"></div>
<div style="left:1319px;top:217px;width:1px;height:773px;background:#d4d4d4;"></div>
<div style="left:1391px;top:217px;width:1px;height:773px;background:#d4d4d4;"></div>
<div style="left:1463px;top:217px;width:1px;height:773px;background:#d4d4d4;"></div>
<div style="left:1535px;top:217px;width:1px;height:773px;background:#d4d4d4;"></div>
<div style="left:1607px;top:217px;width:1px;height:773px;background:#d4d4d4;"></div>
<div style="left:29px;top:237px;width:1609px;height:1px;background:#d4d4d4;"></div>
<div style="left:29px;top:258px;width:1609px;height:1px;background:#d4d4d4;"></div>
<div style="left:29px;top:279px;width:1609px;height:1px;background:#d4d4d4;"></div>
<div style="left:29px;top:300px;width:1609px;height:1px;background:#d4d4d4;"></div>
<div style="left:29px;top:321px;width:1609px;height:1px;background:#d4d4d4;"></div>
<div style="left:29px;top:342px;width:1609px;height:1px;background:#d4d4d4;"></div>
<div style="left:29px;top:363px;width:1609px;height:1px;background:#d4d4d4;"></div>
<div style="left:29px;top:384px;width:1609px;height:1px;background:#d4d4d4;"></div>
<div style="left:29px;top:405px;width:1609px;height:1px;background:#d4d4d4;"></div>
<div style="left:29px;top:426px;width:1609px;height:1px;background:#d4d4d4;"></div>
<div style="left:29px;top:447px;width:1609px;height:1px;background:#d4d4d4;"></div>
<div style="left:29px;top:468px;width:1609px;height:1px;background:#d4d4d4;"></div>
<div style="left:29px;top:489px;width:1609px;height:1px;background:#d4d4d4;"></div>
<div style="left:29px;top:510px;width:1609px;height:1px;background:#d4d4d4;"></div>
<div style="left:29px;top:531px;width:1609px;height:1px;background:#d4d4d4;"></div>
<div style="left:29px;top:552px;width:1609px;height:1px;background:#d4d4d4;"></div>
<div style="left:29px;top:573px;width:1609px;height:1px;background:#d4d4d4;"></div>
<div style="left:29px;top:594px;width:1609px;height:1px;background:#d4d4d4;"></div>
<div style="left:29px;top:615px;width:1609px;height:1px;background:#d4d4d4;"></div>
<div style="left:29px;top:636px;width:1609px;height:1px;background:#d4d4d4;"></div>
<div style="left:29px;top:657px;width:1609px;height:1px;background:#d4d4d4;"></div>
<div style="left:29px;top:678px;width:1609px;height:1px;background:#d4d4d4;"></div>
<div style="left:29px;top:699px;width:1609px;height:1px;background:#d4d4d4;"></div>
<div style="left:29px;top:720px;width:1609px;height:1px;background:#d4d4d4;"></div>
<div style="left:29px;top:741px;width:1609px;height:1px;background:#d4d4d4;"></div>
<div style="left:29px;top:762px;width:1609px;height:1px;background:#d4d4d4;"></div>
<div style="left:29px;top:783px;width:1609px;height:1px;background:#d4d4d4;"></div>
<div style="left:29px;top:804px;width:1609px;height:1px;background:#d4d4d4;"></div>
<div style="left:29px;top:825px;width:1609px;height:1px;background:#d4d4d4;"></div>
<div style="left:29px;top:846px;width:1609px;height:1px;background:#d4d4d4;"></div>
<div style="left:29px;top:867px;width:1609px;height:1px;background:#d4d4d4;"></div>
<div style="left:29px;top:888px;width:1609px;height:1px;background:#d4d4d4;"></div>
<div style="left:29px;top:909px;width:1609px;height:1px;background:#d4d4d4;"></div>
<div style="left:29px;top:930px;width:1609px;height:1px;background:#d4d4d4;"></div>
<div style="left:29px;top:951px;width:1609px;height:1px;background:#d4d4d4;"></div>
<div style="left:29px;top:972px;width:1609px;height:1px;background:#d4d4d4;"></div>
<div style="left:28px;top:196px;width:1610px;height:20px;background:#e6e6e6;"></div>
<div style="left:28px;top:216px;width:1610px;height:1px;background:#ababab;"></div>
<div style="left:28px;top:196px;width:170px;height:20px;background:#d2d2d2;"></div>
<div style="left:28px;top:215px;width:170px;height:2px;background:#217346;"></div>
<div class="t" style="top:197px;font-size:14.4px;line-height:20px;color:#217346;left:93.0px;width:40px;text-align:center;">A</div>
<div style="left:197px;top:196px;width:1px;height:20px;background:#c0c0c0;"></div>
<div class="t" style="top:197px;font-size:14.4px;line-height:20px;color:#262626;left:225.0px;width:40px;text-align:center;">B</div>
<div style="left:292px;top:196px;width:1px;height:20px;background:#c0c0c0;"></div>
<div class="t" style="top:197px;font-size:14.4px;line-height:20px;color:#262626;left:320.0px;width:40px;text-align:center;">C</div>
<div style="left:387px;top:196px;width:1px;height:20px;background:#c0c0c0;"></div>
<div class="t" style="top:197px;font-size:14.4px;line-height:20px;color:#262626;left:437.5px;width:40px;text-align:center;">D</div>
<div style="left:527px;top:196px;width:1px;height:20px;background:#c0c0c0;"></div>
<div class="t" style="top:197px;font-size:14.4px;line-height:20px;color:#262626;left:543.5px;width:40px;text-align:center;">E</div>
<div style="left:599px;top:196px;width:1px;height:20px;background:#c0c0c0;"></div>
<div class="t" style="top:197px;font-size:14.4px;line-height:20px;color:#262626;left:615.5px;width:40px;text-align:center;">F</div>
<div style="left:671px;top:196px;width:1px;height:20px;background:#c0c0c0;"></div>
<div class="t" style="top:197px;font-size:14.4px;line-height:20px;color:#262626;left:687.5px;width:40px;text-align:center;">G</div>
<div style="left:743px;top:196px;width:1px;height:20px;background:#c0c0c0;"></div>
<div class="t" style="top:197px;font-size:14.4px;line-height:20px;color:#262626;left:759.5px;width:40px;text-align:center;">H</div>
<div style="left:815px;top:196px;width:1px;height:20px;background:#c0c0c0;"></div>
<div class="t" style="top:197px;font-size:14.4px;line-height:20px;color:#262626;left:831.5px;width:40px;text-align:center;">I</div>
<div style="left:887px;top:196px;width:1px;height:20px;background:#c0c0c0;"></div>
<div class="t" style="top:197px;font-size:14.4px;line-height:20px;color:#262626;left:903.5px;width:40px;text-align:center;">J</div>
<div style="left:959px;top:196px;width:1px;height:20px;background:#c0c0c0;"></div>
<div class="t" style="top:197px;font-size:14.4px;line-height:20px;color:#262626;left:975.5px;width:40px;text-align:center;">K</div>
<div style="left:1031px;top:196px;width:1px;height:20px;background:#c0c0c0;"></div>
<div class="t" style="top:197px;font-size:14.4px;line-height:20px;color:#262626;left:1047.5px;width:40px;text-align:center;">L</div>
<div style="left:1103px;top:196px;width:1px;height:20px;background:#c0c0c0;"></div>
<div class="t" style="top:197px;font-size:14.4px;line-height:20px;color:#262626;left:1119.5px;width:40px;text-align:center;">M</div>
<div style="left:1175px;top:196px;width:1px;height:20px;background:#c0c0c0;"></div>
<div class="t" style="top:197px;font-size:14.4px;line-height:20px;color:#262626;left:1191.5px;width:40px;text-align:center;">N</div>
<div style="left:1247px;top:196px;width:1px;height:20px;background:#c0c0c0;"></div>
<div class="t" style="top:197px;font-size:14.4px;line-height:20px;color:#262626;left:1263.5px;width:40px;text-align:center;">O</div>
<div style="left:1319px;top:196px;width:1px;height:20px;background:#c0c0c0;"></div>
<div class="t" style="top:197px;font-size:14.4px;line-height:20px;color:#262626;left:1335.5px;width:40px;text-align:center;">P</div>
<div style="left:1391px;top:196px;width:1px;height:20px;background:#c0c0c0;"></div>
<div class="t" style="top:197px;font-size:14.4px;line-height:20px;color:#262626;left:1407.5px;width:40px;text-align:center;">Q</div>
<div style="left:1463px;top:196px;width:1px;height:20px;background:#c0c0c0;"></div>
<div class="t" style="top:197px;font-size:14.4px;line-height:20px;color:#262626;left:1479.5px;width:40px;text-align:center;">R</div>
<div style="left:1535px;top:196px;width:1px;height:20px;background:#c0c0c0;"></div>
<div class="t" style="top:197px;font-size:14.4px;line-height:20px;color:#262626;left:1551.5px;width:40px;text-align:center;">S</div>
<div style="left:1607px;top:196px;width:1px;height:20px;background:#c0c0c0;"></div>
<svg style="left:12px;top:200px;" width="14" height="14" viewBox="0 0 14 14"><path d="M13 0.500V13H0.500Z" fill="#b8b8b8"/></svg>
<div style="left:28px;top:217px;width:1px;height:773px;background:#ababab;"></div>
<div class="t" style="top:218px;font-size:14.4px;line-height:21px;color:#262626;left:0.0px;width:28px;text-align:center;height:21px;overflow:hidden;">1</div>
<div style="left:0px;top:237px;width:28px;height:1px;background:#c0c0c0;"></div>
<div class="t" style="top:239px;font-size:14.4px;line-height:21px;color:#262626;left:0.0px;width:28px;text-align:center;height:21px;overflow:hidden;">2</div>
<div style="left:0px;top:258px;width:28px;height:1px;background:#c0c0c0;"></div>
<div class="t" style="top:260px;font-size:14.4px;line-height:21px;color:#262626;left:0.0px;width:28px;text-align:center;height:21px;overflow:hidden;">3</div>
<div style="left:0px;top:279px;width:28px;height:1px;background:#c0c0c0;"></div>
<div class="t" style="top:281px;font-size:14.4px;line-height:21px;color:#262626;left:0.0px;width:28px;text-align:center;height:21px;overflow:hidden;">4</div>
<div style="left:0px;top:300px;width:28px;height:1px;background:#c0c0c0;"></div>
<div class="t" style="top:302px;font-size:14.4px;line-height:21px;color:#262626;left:0.0px;width:28px;text-align:center;height:21px;overflow:hidden;">5</div>
<div style="left:0px;top:321px;width:28px;height:1px;background:#c0c0c0;"></div>
<div class="t" style="top:323px;font-size:14.4px;line-height:21px;color:#262626;left:0.0px;width:28px;text-align:center;height:21px;overflow:hidden;">6</div>
<div style="left:0px;top:342px;width:28px;height:1px;background:#c0c0c0;"></div>
<div class="t" style="top:344px;font-size:14.4px;line-height:21px;color:#262626;left:0.0px;width:28px;text-align:center;height:21px;overflow:hidden;">7</div>
<div style="left:0px;top:363px;width:28px;height:1px;background:#c0c0c0;"></div>
<div class="t" style="top:365px;font-size:14.4px;line-height:21px;color:#262626;left:0.0px;width:28px;text-align:center;height:21px;overflow:hidden;">8</div>
<div style="left:0px;top:384px;width:28px;height:1px;background:#c0c0c0;"></div>
<div class="t" style="top:386px;font-size:14.4px;line-height:21px;color:#262626;left:0.0px;width:28px;text-align:center;height:21px;overflow:hidden;">9</div>
<div style="left:0px;top:405px;width:28px;height:1px;background:#c0c0c0;"></div>
<div class="t" style="top:407px;font-size:14.4px;line-height:21px;color:#262626;left:0.0px;width:28px;text-align:center;height:21px;overflow:hidden;">10</div>
<div style="left:0px;top:426px;width:28px;height:1px;background:#c0c0c0;"></div>
<div style="left:0px;top:426px;width:28px;height:22px;background:#d2d2d2;"></div>
<div style="left:27px;top:426px;width:2px;height:22px;background:#217346;"></div>
<div class="t" style="top:428px;font-size:14.4px;line-height:21px;color:#217346;left:0.0px;width:28px;text-align:center;height:21px;overflow:hidden;">11</div>
<div style="left:0px;top:447px;width:28px;height:1px;background:#c0c0c0;"></div>
<div class="t" style="top:449px;font-size:14.4px;line-height:21px;color:#262626;left:0.0px;width:28px;text-align:center;height:21px;overflow:hidden;">12</div>
<div style="left:0px;top:468px;width:28px;height:1px;background:#c0c0c0;"></div>
<div class="t" style="top:470px;font-size:14.4px;line-height:21px;color:#262626;left:0.0px;width:28px;text-align:center;height:21px;overflow:hidden;">13</div>
<div style="left:0px;top:489px;width:28px;height:1px;background:#c0c0c0;"></div>
<div class="t" style="top:491px;font-size:14.4px;line-height:21px;color:#262626;left:0.0px;width:28px;text-align:center;height:21px;overflow:hidden;">14</div>
<div style="left:0px;top:510px;width:28px;height:1px;background:#c0c0c0;"></div>
<div class="t" style="top:512px;font-size:14.4px;line-height:21px;color:#262626;left:0.0px;width:28px;text-align:center;height:21px;overflow:hidden;">15</div>
<div style="left:0px;top:531px;width:28px;height:1px;background:#c0c0c0;"></div>
<div class="t" style="top:533px;font-size:14.4px;line-height:21px;color:#262626;left:0.0px;width:28px;text-align:center;height:21px;overflow:hidden;">16</div>
<div style="left:0px;top:552px;width:28px;height:1px;background:#c0c0c0;"></div>
<div class="t" style="top:554px;font-size:14.4px;line-height:21px;color:#262626;left:0.0px;width:28px;text-align:center;height:21px;overflow:hidden;">17</div>
<div style="left:0px;top:573px;width:28px;height:1px;background:#c0c0c0;"></div>
<div class="t" style="top:575px;font-size:14.4px;line-height:21px;color:#262626;left:0.0px;width:28px;text-align:center;height:21px;overflow:hidden;">18</div>
<div style="left:0px;top:594px;width:28px;height:1px;background:#c0c0c0;"></div>
<div class="t" style="top:596px;font-size:14.4px;line-height:21px;color:#262626;left:0.0px;width:28px;text-align:center;height:21px;overflow:hidden;">19</div>
<div style="left:0px;top:615px;width:28px;height:1px;background:#c0c0c0;"></div>
<div class="t" style="top:617px;font-size:14.4px;line-height:21px;color:#262626;left:0.0px;width:28px;text-align:center;height:21px;overflow:hidden;">20</div>
<div style="left:0px;top:636px;width:28px;height:1px;background:#c0c0c0;"></div>
<div class="t" style="top:638px;font-size:14.4px;line-height:21px;color:#262626;left:0.0px;width:28px;text-align:center;height:21px;overflow:hidden;">21</div>
<div style="left:0px;top:657px;width:28px;height:1px;background:#c0c0c0;"></div>
<div class="t" style="top:659px;font-size:14.4px;line-height:21px;color:#262626;left:0.0px;width:28px;text-align:center;height:21px;overflow:hidden;">22</div>
<div style="left:0px;top:678px;width:28px;height:1px;background:#c0c0c0;"></div>
<div class="t" style="top:680px;font-size:14.4px;line-height:21px;color:#262626;left:0.0px;width:28px;text-align:center;height:21px;overflow:hidden;">23</div>
<div style="left:0px;top:699px;width:28px;height:1px;background:#c0c0c0;"></div>
<div class="t" style="top:701px;font-size:14.4px;line-height:21px;color:#262626;left:0.0px;width:28px;text-align:center;height:21px;overflow:hidden;">24</div>
<div style="left:0px;top:720px;width:28px;height:1px;background:#c0c0c0;"></div>
<div class="t" style="top:722px;font-size:14.4px;line-height:21px;color:#262626;left:0.0px;width:28px;text-align:center;height:21px;overflow:hidden;">25</div>
<div style="left:0px;top:741px;width:28px;height:1px;background:#c0c0c0;"></div>
<div class="t" style="top:743px;font-size:14.4px;line-height:21px;color:#262626;left:0.0px;width:28px;text-align:center;height:21px;overflow:hidden;">26</div>
<div style="left:0px;top:762px;width:28px;height:1px;background:#c0c0c0;"></div>
<div class="t" style="top:764px;font-size:14.4px;line-height:21px;color:#262626;left:0.0px;width:28px;text-align:center;height:21px;overflow:hidden;">27</div>
<div style="left:0px;top:783px;width:28px;height:1px;background:#c0c0c0;"></div>
<div class="t" style="top:785px;font-size:14.4px;line-height:21px;color:#262626;left:0.0px;width:28px;text-align:center;height:21px;overflow:hidden;">28</div>
<div style="left:0px;top:804px;width:28px;height:1px;background:#c0c0c0;"></div>
<div class="t" style="top:806px;font-size:14.4px;line-height:21px;color:#262626;left:0.0px;width:28px;text-align:center;height:21px;overflow:hidden;">29</div>
<div style="left:0px;top:825px;width:28px;height:1px;background:#c0c0c0;"></div>
<div class="t" style="top:827px;font-size:14.4px;line-height:21px;color:#262626;left:0.0px;width:28px;text-align:center;height:21px;overflow:hidden;">30</div>
<div style="left:0px;top:846px;width:28px;height:1px;background:#c0c0c0;"></div>
<div class="t" style="top:848px;font-size:14.4px;line-height:21px;color:#262626;left:0.0px;width:28px;text-align:center;height:21px;overflow:hidden;">31</div>
<div style="left:0px;top:867px;width:28px;height:1px;background:#c0c0c0;"></div>
<div class="t" style="top:869px;font-size:14.4px;line-height:21px;color:#262626;left:0.0px;width:28px;text-align:center;height:21px;overflow:hidden;">32</div>
<div style="left:0px;top:888px;width:28px;height:1px;background:#c0c0c0;"></div>
<div class="t" style="top:890px;font-size:14.4px;line-height:21px;color:#262626;left:0.0px;width:28px;text-align:center;height:21px;overflow:hidden;">33</div>
<div style="left:0px;top:909px;width:28px;height:1px;background:#c0c0c0;"></div>
<div class="t" style="top:911px;font-size:14.4px;line-height:21px;color:#262626;left:0.0px;width:28px;text-align:center;height:21px;overflow:hidden;">34</div>
<div style="left:0px;top:930px;width:28px;height:1px;background:#c0c0c0;"></div>
<div class="t" style="top:932px;font-size:14.4px;line-height:21px;color:#262626;left:0.0px;width:28px;text-align:center;height:21px;overflow:hidden;">35</div>
<div style="left:0px;top:951px;width:28px;height:1px;background:#c0c0c0;"></div>
<div class="t" style="top:953px;font-size:14.4px;line-height:21px;color:#262626;left:0.0px;width:28px;text-align:center;height:21px;overflow:hidden;">36</div>
<div style="left:0px;top:972px;width:28px;height:1px;background:#c0c0c0;"></div>
<div class="t" style="top:974px;font-size:14.4px;line-height:21px;color:#262626;left:0.0px;width:28px;text-align:center;height:17px;overflow:hidden;">37</div>
<div style="left:29px;top:258px;width:499px;height:21px;background:#76933c;"></div>
<div style="left:292px;top:258px;width:95px;height:21px;background:#c6efce;"></div>
<div style="left:29px;top:300px;width:499px;height:21px;background:#ebf1de;"></div>
<div style="left:29px;top:342px;width:499px;height:21px;background:#ebf1de;"></div>
<div style="left:29px;top:384px;width:499px;height:21px;background:#ebf1de;"></div>
<div style="left:29px;top:426px;width:499px;height:21px;background:#ebf1de;"></div>
<div style="left:29px;top:279px;width:499px;height:21px;background:#c4d79b;"></div>
<div style="left:29px;top:279px;width:499px;height:1px;background:#a8c373;"></div>
<div style="left:29px;top:321px;width:499px;height:21px;background:#c4d79b;"></div>
<div style="left:29px;top:321px;width:499px;height:1px;background:#a8c373;"></div>
<div style="left:29px;top:363px;width:499px;height:21px;background:#c4d79b;"></div>
<div style="left:29px;top:363px;width:499px;height:1px;background:#a8c373;"></div>
<div style="left:29px;top:405px;width:499px;height:21px;background:#c4d79b;"></div>
<div style="left:29px;top:405px;width:499px;height:1px;background:#a8c373;"></div>
<div class="c" style="left:31px;top:260px;color:#fff"><span style="letter-spacing:-0.2px">Row Labels</span></div>
<div class="c" style="left:200px;top:260px;color:#fff"><span style="letter-spacing:-0.3px">Sum of Sales</span></div>
<div class="c" style="left:295px;top:260px;color:#006100"><span style="letter-spacing:-0.1px">Sum of Profit</span></div>
<div class="c" style="left:390px;top:260px;color:#fff">Average of Discount</div>
<div style="left:180px;top:261px;width:17px;height:17px;background:#fff;border:1px solid #b0b0b0;"></div>
<svg style="left:183px;top:266px;" width="11" height="9" viewBox="0 0 11 9"><path d="M0 5H4.500L2.250 8Z" fill="#555"/><path d="M7.500 0V7.500M5.500 5.500L7.500 7.800L9.500 5.500" fill="none" stroke="#555" stroke-width="1.100"/></svg>
<div class="c" style="left:45px;top:281px;color:#fff">Central</div>
<div class="c" style="left:-10px;width:300px;text-align:right;top:281px;color:#fff">487232.9114</div>
<div class="c" style="left:85px;width:300px;text-align:right;top:281px;color:#fff">43340.7899</div>
<div class="c" style="left:225px;width:300px;text-align:right;top:281px;color:#fff">24%</div>
<svg style="left:34.4px;top:287px;" width="9" height="9" viewBox="0 0 9 9"><rect x="0.500" y="0.500" width="8" height="8" rx="0.800" fill="#f6f6f6" stroke="#98a5b8"/><path d="M2.500 4.500H6.500" stroke="#33435a" stroke-width="1"/></svg>
<div class="c" style="left:62px;top:302px;color:#000">Kelly Williams</div>
<div class="c" style="left:-10px;width:300px;text-align:right;top:302px;color:#000">487232.9114</div>
<div class="c" style="left:85px;width:300px;text-align:right;top:302px;color:#000">43340.7899</div>
<div class="c" style="left:225px;width:300px;text-align:right;top:302px;color:#000">24%</div>
<svg style="left:51.4px;top:308px;" width="9" height="9" viewBox="0 0 9 9"><rect x="0.500" y="0.500" width="8" height="8" rx="0.800" fill="#f6f6f6" stroke="#98a5b8"/><path d="M2.500 4.500H6.500M4.500 2.500V6.500" stroke="#33435a" stroke-width="1"/></svg>
<div class="c" style="left:45px;top:323px;color:#fff">East</div>
<div class="c" style="left:-10px;width:300px;text-align:right;top:323px;color:#fff">637076.096</div>
<div class="c" style="left:85px;width:300px;text-align:right;top:323px;color:#fff">86537.9794</div>
<div class="c" style="left:225px;width:300px;text-align:right;top:323px;color:#fff">15%</div>
<svg style="left:34.4px;top:329px;" width="9" height="9" viewBox="0 0 9 9"><rect x="0.500" y="0.500" width="8" height="8" rx="0.800" fill="#f6f6f6" stroke="#98a5b8"/><path d="M2.500 4.500H6.500" stroke="#33435a" stroke-width="1"/></svg>
<div class="c" style="left:62px;top:344px;color:#000">Chuck Magee</div>
<div class="c" style="left:-10px;width:300px;text-align:right;top:344px;color:#000">637076.096</div>
<div class="c" style="left:85px;width:300px;text-align:right;top:344px;color:#000">86537.9794</div>
<div class="c" style="left:225px;width:300px;text-align:right;top:344px;color:#000">15%</div>
<svg style="left:51.4px;top:350px;" width="9" height="9" viewBox="0 0 9 9"><rect x="0.500" y="0.500" width="8" height="8" rx="0.800" fill="#f6f6f6" stroke="#98a5b8"/><path d="M2.500 4.500H6.500M4.500 2.500V6.500" stroke="#33435a" stroke-width="1"/></svg>
<div class="c" style="left:45px;top:365px;color:#fff">South</div>
<div class="c" style="left:-10px;width:300px;text-align:right;top:365px;color:#fff">374412.808</div>
<div class="c" style="left:85px;width:300px;text-align:right;top:365px;color:#fff">44530.8198</div>
<div class="c" style="left:225px;width:300px;text-align:right;top:365px;color:#fff">15%</div>
<svg style="left:34.4px;top:371px;" width="9" height="9" viewBox="0 0 9 9"><rect x="0.500" y="0.500" width="8" height="8" rx="0.800" fill="#f6f6f6" stroke="#98a5b8"/><path d="M2.500 4.500H6.500" stroke="#33435a" stroke-width="1"/></svg>
<div class="c" style="left:62px;top:386px;color:#000">Cassandra Brandow</div>
<div class="c" style="left:-10px;width:300px;text-align:right;top:386px;color:#000">374412.808</div>
<div class="c" style="left:85px;width:300px;text-align:right;top:386px;color:#000">44530.8198</div>
<div class="c" style="left:225px;width:300px;text-align:right;top:386px;color:#000">15%</div>
<svg style="left:51.4px;top:392px;" width="9" height="9" viewBox="0 0 9 9"><rect x="0.500" y="0.500" width="8" height="8" rx="0.800" fill="#f6f6f6" stroke="#98a5b8"/><path d="M2.500 4.500H6.500M4.500 2.500V6.500" stroke="#33435a" stroke-width="1"/></svg>
<div class="c" style="left:45px;top:407px;color:#fff">West</div>
<div class="c" style="left:-10px;width:300px;text-align:right;top:407px;color:#fff">617974.767</div>
<div class="c" style="left:85px;width:300px;text-align:right;top:407px;color:#fff">88755.0711</div>
<div class="c" style="left:225px;width:300px;text-align:right;top:407px;color:#fff">11%</div>
<svg style="left:34.4px;top:413px;" width="9" height="9" viewBox="0 0 9 9"><rect x="0.500" y="0.500" width="8" height="8" rx="0.800" fill="#f6f6f6" stroke="#98a5b8"/><path d="M2.500 4.500H6.500" stroke="#33435a" stroke-width="1"/></svg>
<div class="c" style="left:62px;top:428px;color:#000">Anna Andreadi</div>
<div class="c" style="left:-10px;width:300px;text-align:right;top:428px;color:#000">617974.767</div>
<div class="c" style="left:85px;width:300px;text-align:right;top:428px;color:#000">88755.0711</div>
<div class="c" style="left:225px;width:300px;text-align:right;top:428px;color:#000">11%</div>
<svg style="left:51.4px;top:434px;" width="9" height="9" viewBox="0 0 9 9"><rect x="0.500" y="0.500" width="8" height="8" rx="0.800" fill="#f6f6f6" stroke="#98a5b8"/><path d="M2.500 4.500H6.500M4.500 2.500V6.500" stroke="#33435a" stroke-width="1"/></svg>
<div style="left:29px;top:448px;width:499px;height:20px;background:#fff;"></div>
<div class="c b" style="left:31px;top:449px;color:#000">Grand Total</div>
<div class="c b" style="left:-10px;width:300px;text-align:right;top:449px;color:#000">2116696.582</div>
<div class="c b" style="left:85px;width:300px;text-align:right;top:449px;color:#000">263164.6602</div>
<div class="c b" style="left:225px;width:300px;text-align:right;top:449px;color:#000">16%</div>
<div style="left:198px;top:446px;width:329px;height:1px;background:#76933c;"></div>
<div style="left:198px;top:448px;width:329px;height:1px;background:#76933c;"></div>
<div style="left:27px;top:425px;width:172px;height:24px;border:2px solid #217346;"></div>
<div style="left:194px;top:444px;width:7px;height:7px;background:#217346;border:1px solid #fff;"></div>
<div style="left:1637px;top:216px;width:1px;height:774px;background:#a6a6a6;"></div>
<div style="left:1641px;top:198px;width:15px;height:792px;background:#dcdcdc;"></div>
<div style="left:1641px;top:198px;width:15px;height:15px;background:#fff;border:1px solid #ababab;"></div>
<svg style="left:1645px;top:203px;" width="7" height="4" viewBox="0 0 7 4"><path d="M0 4H7L3.500 0Z" fill="#777"/></svg>
<div style="left:1641px;top:214px;width:15px;height:342px;background:#fff;border:1px solid #ababab;"></div>
<div style="left:1641px;top:976px;width:15px;height:15px;background:#fff;border:1px solid #ababab;"></div>
<svg style="left:1645px;top:982px;" width="7" height="4" viewBox="0 0 7 4"><path d="M0 0H7L3.500 4Z" fill="#777"/></svg>
<svg style="left:637px;top:469px;" width="481" height="289" viewBox="0 0 481 289"><defs><linearGradient id="gb" x1="0" x2="1" y1="0" y2="0"><stop offset="0" stop-color="#3f78c6"/><stop offset="0.12" stop-color="#78aaea"/><stop offset="0.45" stop-color="#94c0f6"/><stop offset="0.8" stop-color="#6a9fe3"/><stop offset="1" stop-color="#3566ad"/></linearGradient><linearGradient id="gr" x1="0" x2="1" y1="0" y2="0"><stop offset="0" stop-color="#c9504d"/><stop offset="0.12" stop-color="#ec8f8c"/><stop offset="0.45" stop-color="#f6b1af"/><stop offset="0.8" stop-color="#e37875"/><stop offset="1" stop-color="#b8403d"/></linearGradient><linearGradient id="gbh" x1="0" x2="0" y1="0" y2="1"><stop offset="0" stop-color="#cfe8fb"/><stop offset="0.45" stop-color="#7fb0ea"/><stop offset="1" stop-color="#3b73bd"/></linearGradient><linearGradient id="grh" x1="0" x2="0" y1="0" y2="1"><stop offset="0" stop-color="#fbd3d2"/><stop offset="0.45" stop-color="#ea8885"/><stop offset="1" stop-color="#c24b48"/></linearGradient><linearGradient id="gg" x1="0" x2="0" y1="0" y2="1"><stop offset="0" stop-color="#dcdcdc"/><stop offset="1" stop-color="#c4c4c4"/></linearGradient><radialGradient id="gm" cx="0.4" cy="0.35" r="0.7"><stop offset="0" stop-color="#e3eec4"/><stop offset="0.5" stop-color="#a9c65f"/><stop offset="1" stop-color="#76913a"/></radialGradient></defs><rect x="0.5" y="0.5" width="480" height="288" fill="#fff" stroke="#d9d9d9"/><rect x="11" y="8" width="68.5" height="17" fill="url(#gg)"/><text x="45.25" y="21" font-size="10.600" text-anchor="middle" fill="#222" font-family="Liberation Sans, sans-serif">Sum of Sales</text><rect x="81" y="8" width="69.3" height="17" fill="url(#gg)"/><text x="115.65" y="21" font-size="10.600" text-anchor="middle" fill="#222" font-family="Liberation Sans, sans-serif">Sum of Profit</text><rect x="151.6" y="8" width="101.4" height="17" fill="url(#gg)"/><text x="202.3" y="21" font-size="10.600" text-anchor="middle" fill="#222" font-family="Liberation Sans, sans-serif">Average of Discount</text><path d="M56.4 192.5H291.9" stroke="#d9d9d9" stroke-width="1"/><text x="45.5" y="196.9" font-size="10.800" text-anchor="end" fill="#404040" font-family="Liberation Sans, sans-serif">0</text><path d="M56.4 171.5H291.9" stroke="#d9d9d9" stroke-width="1"/><text x="45.5" y="175.14" font-size="10.800" text-anchor="end" fill="#404040" font-family="Liberation Sans, sans-serif">100000</text><path d="M56.4 149.5H291.9" stroke="#d9d9d9" stroke-width="1"/><text x="45.5" y="153.39" font-size="10.800" text-anchor="end" fill="#404040" font-family="Liberation Sans, sans-serif">200000</text><path d="M56.4 127.5H291.9" stroke="#d9d9d9" stroke-width="1"/><text x="45.5" y="131.63" font-size="10.800" text-anchor="end" fill="#404040" font-family="Liberation Sans, sans-serif">300000</text><path d="M56.4 105.5H291.9" stroke="#d9d9d9" stroke-width="1"/><text x="45.5" y="109.87" font-size="10.800" text-anchor="end" fill="#404040" font-family="Liberation Sans, sans-serif">400000</text><path d="M56.4 84.5H291.9" stroke="#d9d9d9" stroke-width="1"/><text x="45.5" y="88.11" font-size="10.800" text-anchor="end" fill="#404040" font-family="Liberation Sans, sans-serif">500000</text><path d="M56.4 62.5H291.9" stroke="#d9d9d9" stroke-width="1"/><text x="45.5" y="66.36" font-size="10.800" text-anchor="end" fill="#404040" font-family="Liberation Sans, sans-serif">600000</text><path d="M56.4 40.5H291.9" stroke="#d9d9d9" stroke-width="1"/><text x="45.5" y="44.6" font-size="10.800" text-anchor="end" fill="#404040" font-family="Liberation Sans, sans-serif">700000</text><text x="303" y="196.9" font-size="10.800" fill="#404040" font-family="Liberation Sans, sans-serif">0%</text><text x="303" y="166.44" font-size="10.800" fill="#404040" font-family="Liberation Sans, sans-serif">5%</text><text x="303" y="135.98" font-size="10.800" fill="#404040" font-family="Liberation Sans, sans-serif">10%</text><text x="303" y="105.52" font-size="10.800" fill="#404040" font-family="Liberation Sans, sans-serif">15%</text><text x="303" y="75.06" font-size="10.800" fill="#404040" font-family="Liberation Sans, sans-serif">20%</text><text x="303" y="44.6" font-size="10.800" fill="#404040" font-family="Liberation Sans, sans-serif">25%</text><path d="M56.5 193V254.5" stroke="#d9d9d9" stroke-width="1"/><path d="M115.5 193V254.5" stroke="#d9d9d9" stroke-width="1"/><path d="M174.5 193V254.5" stroke="#d9d9d9" stroke-width="1"/><path d="M233.5 193V254.5" stroke="#d9d9d9" stroke-width="1"/><path d="M292.5 193V254.5" stroke="#d9d9d9" stroke-width="1"/><rect x="71.64" y="87.29" width="13.600" height="106.01" fill="url(#gb)"/><path d="M72.14 87.59H84.74L78.44 92.29Z" fill="#d9f3ff"/><rect x="87.04" y="183.87" width="13.400" height="9.43" fill="url(#gr)"/><path d="M87.54 184.17H99.94L93.74 188.37Z" fill="#fde3e2"/><text x="85.84" y="212" font-size="10.800" text-anchor="middle" fill="#404040" font-family="Liberation Sans, sans-serif">Kelly</text><text x="85.84" y="227" font-size="10.800" text-anchor="middle" fill="#404040" font-family="Liberation Sans, sans-serif">Williams</text><text x="85.84" y="250" font-size="10.800" text-anchor="middle" fill="#404040" font-family="Liberation Sans, sans-serif">Central</text><rect x="130.51" y="54.69" width="13.600" height="138.61" fill="url(#gb)"/><path d="M131.01 54.99H143.61L137.31 59.69Z" fill="#d9f3ff"/><rect x="145.91" y="174.47" width="13.400" height="18.83" fill="url(#gr)"/><path d="M146.41 174.77H158.81L152.61 178.97Z" fill="#fde3e2"/><text x="144.71" y="212" font-size="10.800" text-anchor="middle" fill="#404040" font-family="Liberation Sans, sans-serif">Chuck</text><text x="144.71" y="227" font-size="10.800" text-anchor="middle" fill="#404040" font-family="Liberation Sans, sans-serif">Magee</text><text x="144.71" y="250" font-size="10.800" text-anchor="middle" fill="#404040" font-family="Liberation Sans, sans-serif">East</text><rect x="189.39" y="111.84" width="13.600" height="81.46" fill="url(#gb)"/><path d="M189.89 112.14H202.49L196.19 116.84Z" fill="#d9f3ff"/><rect x="204.79" y="183.61" width="13.400" height="9.69" fill="url(#gr)"/><path d="M205.29 183.91H217.69L211.49 188.11Z" fill="#fde3e2"/><text x="203.59" y="212" font-size="10.800" text-anchor="middle" fill="#404040" font-family="Liberation Sans, sans-serif">Cassandra</text><text x="203.59" y="227" font-size="10.800" text-anchor="middle" fill="#404040" font-family="Liberation Sans, sans-serif">Brandow</text><text x="203.59" y="250" font-size="10.800" text-anchor="middle" fill="#404040" font-family="Liberation Sans, sans-serif">South</text><rect x="248.26" y="58.85" width="13.600" height="134.45" fill="url(#gb)"/><path d="M248.76 59.15H261.36L255.06 63.85Z" fill="#d9f3ff"/><rect x="263.66" y="173.99" width="13.400" height="19.31" fill="url(#gr)"/><path d="M264.16 174.29H276.56L270.36 178.49Z" fill="#fde3e2"/><text x="262.46" y="212" font-size="10.800" text-anchor="middle" fill="#404040" font-family="Liberation Sans, sans-serif">Anna</text><text x="262.46" y="227" font-size="10.800" text-anchor="middle" fill="#404040" font-family="Liberation Sans, sans-serif">Andreadi</text><text x="262.46" y="250" font-size="10.800" text-anchor="middle" fill="#404040" font-family="Liberation Sans, sans-serif">West</text><path d="M85.84 47.8 L144.71 103.8 L203.59 103.8 L262.46 127" fill="none" stroke="#9bbb59" stroke-width="3" stroke-linejoin="round"/><circle cx="85.84" cy="47.8" r="4.300" fill="url(#gm)" stroke="#8aa84a" stroke-width="0.600"/><circle cx="144.71" cy="103.8" r="4.300" fill="url(#gm)" stroke="#8aa84a" stroke-width="0.600"/><circle cx="203.59" cy="103.8" r="4.300" fill="url(#gm)" stroke="#8aa84a" stroke-width="0.600"/><circle cx="262.46" cy="127" r="4.300" fill="url(#gm)" stroke="#8aa84a" stroke-width="0.600"/><rect x="11" y="262.5" width="53.3" height="16" fill="url(#gg)"/><text x="14" y="274.5" font-size="10.500" fill="#222" font-family="Liberation Sans, sans-serif">Region</text><path d="M53.3 269H60.3L56.8 273Z" fill="#444"/><rect x="66.3" y="262.5" width="112.1" height="16" fill="url(#gg)"/><text x="69.3" y="274.5" font-size="10.500" fill="#222" font-family="Liberation Sans, sans-serif">NewColumn.Person</text><path d="M167.4 269H174.4L170.9 273Z" fill="#444"/><rect x="180.1" y="262.5" width="84.4" height="16" fill="url(#gg)"/><text x="183.1" y="274.5" font-size="10.500" fill="#222" font-family="Liberation Sans, sans-serif">Sub-Category</text><path d="M253.5 269H260.5L257.0 273Z" fill="#444"/><rect x="438.3" y="262.5" width="14.500" height="16" fill="url(#gg)"/><path d="M441.5 270.5H449.5M445.5 266.5V274.5" stroke="#8a8a8a" stroke-width="1.800"/><rect x="454" y="262.5" width="14.800" height="16" fill="url(#gg)"/><path d="M457.5 270.5H465.5" stroke="#8a8a8a" stroke-width="1.800"/><rect x="333" y="102.2" width="138" height="16.300" fill="url(#gg)"/><text x="336.5" y="114.5" font-size="10.800" fill="#222" font-family="Liberation Sans, sans-serif">Values</text><rect x="338" y="126.5" width="26.500" height="7.500" fill="url(#gbh)" stroke="#4677b8" stroke-width="0.700"/><rect x="339.5" y="127.8" width="23.500" height="1.600" fill="#e6f6ff"/><text x="366.5" y="134" font-size="10.800" fill="#404040" font-family="Liberation Sans, sans-serif">Sum of Sales</text><rect x="338" y="149.5" width="26.500" height="7" fill="url(#grh)" stroke="#c0504d" stroke-width="0.700"/><rect x="339.5" y="150.8" width="23.500" height="1.600" fill="#fdeaea"/><text x="366.5" y="157" font-size="10.800" fill="#404040" font-family="Liberation Sans, sans-serif">Sum of Profit</text><path d="M337.5 175.8H365" stroke="#9bbb59" stroke-width="3"/><circle cx="351.5" cy="175.8" r="3.800" fill="url(#gm)" stroke="#8aa84a" stroke-width="0.600"/><text x="366.5" y="179" font-size="10.800" fill="#404040" font-family="Liberation Sans, sans-serif">Average of Discount</text></svg>
<div style="left:1656px;top:196px;width:264px;height:823px;background:#e6e6e6;"></div>
<div style="left:1659px;top:198px;width:1px;height:820px;background:#c6c6c6;"></div>
<div class="t" style="top:209px;font-size:20.4px;line-height:26px;color:#2f7d52;left:1673px;letter-spacing:-0.1px;">PivotTable Fields</div>
<svg style="left:1880px;top:217px;" width="9" height="5" viewBox="0 0 9 5"><path d="M0 0H9L4.5 5Z" fill="#555"/></svg>
<svg style="left:1897px;top:215px;" width="10" height="10" viewBox="0 0 10 10"><path d="M1 1L9 9M9 1L1 9" stroke="#444" stroke-width="1.600"/></svg>
<div class="t" style="top:249px;font-size:12px;line-height:16px;color:#333;left:1673px;">Choose fields to add to report:</div>
<div style="left:1862px;top:243px;width:44px;height:27px;background:#fff;border:1px solid #ababab;"></div>
<svg style="left:1871px;top:249px;" width="14" height="14" viewBox="0 0 14 14"><g transform="translate(7,7)"><rect x="-1.300" y="-7" width="2.600" height="4" fill="#8a8a8a" transform="rotate(0)"/><rect x="-1.300" y="-7" width="2.600" height="4" fill="#8a8a8a" transform="rotate(45)"/><rect x="-1.300" y="-7" width="2.600" height="4" fill="#8a8a8a" transform="rotate(90)"/><rect x="-1.300" y="-7" width="2.600" height="4" fill="#8a8a8a" transform="rotate(135)"/><rect x="-1.300" y="-7" width="2.600" height="4" fill="#8a8a8a" transform="rotate(180)"/><rect x="-1.300" y="-7" width="2.600" height="4" fill="#8a8a8a" transform="rotate(225)"/><rect x="-1.300" y="-7" width="2.600" height="4" fill="#8a8a8a" transform="rotate(270)"/><rect x="-1.300" y="-7" width="2.600" height="4" fill="#8a8a8a" transform="rotate(315)"/><circle r="4.600" fill="#8a8a8a"/><circle r="2" fill="#fff"/></g></svg>
<svg style="left:1893px;top:255px;" width="7" height="4" viewBox="0 0 7 4"><path d="M0 0H7L3.5 4Z" fill="#555"/></svg>
<div style="left:1672px;top:283px;width:234px;height:20px;background:#fff;border:1px solid #ababab;"></div>
<div class="t" style="top:285px;font-size:11.3px;line-height:16px;color:#555;left:1674px;">Search</div>
<svg style="left:1889px;top:286px;" width="14" height="14" viewBox="0 0 14 14"><circle cx="8.500" cy="5" r="3.800" fill="none" stroke="#3a7bc8" stroke-width="1.400"/><path d="M6 7.500L1.500 12" stroke="#3a7bc8" stroke-width="2"/></svg>
<div style="left:1672px;top:319px;width:234px;height:287px;background:#fff;"></div>
<div style="left:1672px;top:319px;width:218px;height:287px;overflow:hidden;"><div style="left:2px;top:-3px;width:13px;height:13px;background:#fff;border:1px solid #8e8e8e;"></div><div class="t" style="top:-4px;font-size:12px;line-height:17px;color:#333;left:21px;">State</div><div style="left:2px;top:15px;width:13px;height:13px;background:#fff;border:1px solid #8e8e8e;"></div><div class="t" style="top:14px;font-size:12px;line-height:17px;color:#333;left:21px;">Postal Code</div><div style="left:2px;top:34px;width:13px;height:13px;background:#fff;border:1px solid #8e8e8e;"></div><svg style="left:4px;top:36px;" width="9" height="9" viewBox="0 0 9 9"><path d="M1 4.500L3.500 7.500L8 1" fill="none" stroke="#6e6e6e" stroke-width="1.500"/></svg><div class="t" style="top:33px;font-size:12px;line-height:17px;color:#333;left:21px;font-weight:bold;letter-spacing:-0.250px;">Region</div><div style="left:2px;top:53px;width:13px;height:13px;background:#fff;border:1px solid #8e8e8e;"></div><div class="t" style="top:52px;font-size:12px;line-height:17px;color:#333;left:21px;">Product ID</div><div style="left:2px;top:72px;width:13px;height:13px;background:#fff;border:1px solid #8e8e8e;"></div><div class="t" style="top:71px;font-size:12px;line-height:17px;color:#333;left:21px;">Category</div><div style="left:2px;top:91px;width:13px;height:13px;background:#fff;border:1px solid #8e8e8e;"></div><svg style="left:4px;top:93px;" width="9" height="9" viewBox="0 0 9 9"><path d="M1 4.500L3.500 7.500L8 1" fill="none" stroke="#6e6e6e" stroke-width="1.500"/></svg><div class="t" style="top:90px;font-size:12px;line-height:17px;color:#333;left:21px;font-weight:bold;letter-spacing:-0.250px;">Sub-Category</div><div style="left:2px;top:110px;width:13px;height:13px;background:#fff;border:1px solid #8e8e8e;"></div><div class="t" style="top:109px;font-size:12px;line-height:17px;color:#333;left:21px;">Product Name</div><div style="left:2px;top:129px;width:13px;height:13px;background:#fff;border:1px solid #8e8e8e;"></div><svg style="left:4px;top:131px;" width="9" height="9" viewBox="0 0 9 9"><path d="M1 4.500L3.500 7.500L8 1" fill="none" stroke="#6e6e6e" stroke-width="1.500"/></svg><div class="t" style="top:128px;font-size:12px;line-height:17px;color:#333;left:21px;font-weight:bold;letter-spacing:-0.250px;">Sales</div><div style="left:2px;top:148px;width:13px;height:13px;background:#fff;border:1px solid #8e8e8e;"></div><div class="t" style="top:147px;font-size:12px;line-height:17px;color:#333;left:21px;">Quantity</div><div style="left:2px;top:167px;width:13px;height:13px;background:#fff;border:1px solid #8e8e8e;"></div><svg style="left:4px;top:169px;" width="9" height="9" viewBox="0 0 9 9"><path d="M1 4.500L3.500 7.500L8 1" fill="none" stroke="#6e6e6e" stroke-width="1.500"/></svg><div class="t" style="top:166px;font-size:12px;line-height:17px;color:#333;left:21px;font-weight:bold;letter-spacing:-0.250px;">Discount</div><div style="left:2px;top:186px;width:13px;height:13px;background:#fff;border:1px solid #8e8e8e;"></div><svg style="left:4px;top:188px;" width="9" height="9" viewBox="0 0 9 9"><path d="M1 4.500L3.500 7.500L8 1" fill="none" stroke="#6e6e6e" stroke-width="1.500"/></svg><div class="t" style="top:185px;font-size:12px;line-height:17px;color:#333;left:21px;font-weight:bold;letter-spacing:-0.250px;">Profit</div><div style="left:2px;top:205px;width:13px;height:13px;background:#fff;border:1px solid #8e8e8e;"></div><div class="t" style="top:204px;font-size:12px;line-height:17px;color:#333;left:21px;">Order Status</div><div style="left:2px;top:224px;width:13px;height:13px;background:#fff;border:1px solid #8e8e8e;"></div><div class="t" style="top:223px;font-size:12px;line-height:17px;color:#333;left:21px;">Column1</div><div style="left:2px;top:243px;width:13px;height:13px;background:#fff;border:1px solid #8e8e8e;"></div><svg style="left:4px;top:245px;" width="9" height="9" viewBox="0 0 9 9"><path d="M1 4.500L3.500 7.500L8 1" fill="none" stroke="#6e6e6e" stroke-width="1.500"/></svg><div class="t" style="top:242px;font-size:12px;line-height:17px;color:#333;left:21px;font-weight:bold;letter-spacing:-0.250px;">NewColumn.Person</div></div>
<div class="t" style="top:587px;font-size:11.4px;line-height:16px;color:#333;left:1674px;letter-spacing:-0.400px;">MORE TABLES...</div>
<div style="left:1890px;top:319px;width:16px;height:287px;background:#f1f1f1;"></div>
<div style="left:1890px;top:321px;width:15px;height:15px;background:#fff;border:1px solid #ababab;"></div>
<svg style="left:1894px;top:326px;" width="7" height="4" viewBox="0 0 7 4"><path d="M0 4H7L3.500 0Z" fill="#666"/></svg>
<div style="left:1890px;top:438px;width:15px;height:151px;background:#fff;border:1px solid #ababab;"></div>
<div style="left:1890px;top:589px;width:15px;height:15px;background:#fff;border:1px solid #ababab;"></div>
<svg style="left:1894px;top:595px;" width="7" height="4" viewBox="0 0 7 4"><path d="M0 0H7L3.500 4Z" fill="#666"/></svg>
<div style="left:1673px;top:622px;width:236px;height:1px;background:repeating-linear-gradient(90deg,#b4b4b4 0,#b4b4b4 1px,transparent 1px,transparent 3px);"></div>
<div class="t" style="top:627px;font-size:11.6px;line-height:16px;color:#333;left:1676px;">Drag fields between areas below:</div>
<div style="left:1675px;top:679px;width:109px;height:127px;background:#fff;"></div>
<div style="left:1793px;top:679px;width:114px;height:127px;background:#fff;"></div>
<div style="left:1675px;top:839px;width:109px;height:127px;background:#fff;"></div>
<div style="left:1793px;top:839px;width:114px;height:127px;background:#fff;"></div>
<div style="left:1790px;top:659px;width:1px;height:307px;background:#c6c6c6;"></div>
<div style="left:1675px;top:812px;width:232px;height:1px;background:#c6c6c6;"></div>
<svg style="left:1678px;top:661px;" width="11" height="11" viewBox="0 0 11 11"><path d="M0 0.500H11L6.800 5.500V10.500L4.200 9V5.500Z" fill="#8a8a8a"/></svg>
<div class="t" style="top:660px;font-size:11.4px;line-height:16px;color:#333;left:1698px;letter-spacing:-0.400px;">FILTERS</div>
<svg style="left:1797px;top:662px;" width="11" height="10" viewBox="0 0 11 10"><path d="M0.500 0V10M3 0V10M5.500 0V10M8 0V10M10.500 0V10" stroke="#8a8a8a" stroke-width="1"/></svg>
<div class="t" style="top:660px;font-size:11.4px;line-height:16px;color:#333;left:1816px;letter-spacing:-0.400px;">COLUMNS</div>
<svg style="left:1679px;top:822px;" width="11" height="9" viewBox="0 0 11 9"><path d="M0 0.500H11M0 3H11M0 5.500H11M0 8H11" stroke="#8a8a8a" stroke-width="1"/></svg>
<div class="t" style="top:820px;font-size:11.4px;line-height:16px;color:#333;left:1698px;letter-spacing:-0.400px;">ROWS</div>
<div class="t" style="top:818px;font-size:14.5px;line-height:18px;color:#777;left:1798px;font-family:'Liberation Serif',serif;">Σ</div>
<div class="t" style="top:820px;font-size:11.4px;line-height:16px;color:#333;left:1816px;letter-spacing:-0.400px;">VALUES</div>
<div style="left:1794px;top:681px;width:112px;height:20px;background:#fff;border:1px solid #ababab;"></div>
<div class="t" style="top:682px;font-size:14px;line-height:17px;color:#777;left:1801px;font-family:'Liberation Serif',serif;">Σ</div>
<div class="t" style="top:683px;font-size:11.6px;line-height:16px;color:#333;left:1818px;letter-spacing:-0.150px;">Values</div>
<svg style="left:1889px;top:688px;" width="7" height="4" viewBox="0 0 7 4"><path d="M0 0H7L3.5 4Z" fill="#222"/></svg>
<div style="left:1676px;top:841px;width:107px;height:19px;background:#fff;border:1px solid #ababab;"></div>
<div class="t" style="top:843px;font-size:11.6px;line-height:16px;color:#333;left:1683px;letter-spacing:-0.150px;">Region</div>
<svg style="left:1766px;top:848px;" width="7" height="4" viewBox="0 0 7 4"><path d="M0 0H7L3.5 4Z" fill="#222"/></svg>
<div style="left:1676px;top:862px;width:107px;height:19px;background:#fff;border:1px solid #ababab;"></div>
<div class="t" style="top:864px;font-size:11.6px;line-height:16px;color:#333;left:1683px;letter-spacing:-0.150px;">NewColumn....</div>
<svg style="left:1766px;top:869px;" width="7" height="4" viewBox="0 0 7 4"><path d="M0 0H7L3.5 4Z" fill="#222"/></svg>
<div style="left:1676px;top:883px;width:107px;height:19px;background:#fff;border:1px solid #ababab;"></div>
<div class="t" style="top:885px;font-size:11.6px;line-height:16px;color:#333;left:1683px;letter-spacing:-0.150px;">Sub-Category</div>
<svg style="left:1766px;top:890px;" width="7" height="4" viewBox="0 0 7 4"><path d="M0 0H7L3.5 4Z" fill="#222"/></svg>
<div style="left:1794px;top:841px;width:112px;height:19px;background:#fff;border:1px solid #ababab;"></div>
<div class="t" style="top:843px;font-size:11.6px;line-height:16px;color:#333;left:1801px;letter-spacing:-0.150px;">Sum of Sales</div>
<svg style="left:1889px;top:848px;" width="7" height="4" viewBox="0 0 7 4"><path d="M0 0H7L3.5 4Z" fill="#222"/></svg>
<div style="left:1794px;top:862px;width:112px;height:19px;background:#fff;border:1px solid #ababab;"></div>
<div class="t" style="top:864px;font-size:11.6px;line-height:16px;color:#333;left:1801px;letter-spacing:-0.150px;">Sum of Profit</div>
<svg style="left:1889px;top:869px;" width="7" height="4" viewBox="0 0 7 4"><path d="M0 0H7L3.5 4Z" fill="#222"/></svg>
<div style="left:1794px;top:883px;width:112px;height:19px;background:#fff;border:1px solid #ababab;"></div>
<div class="t" style="top:885px;font-size:11.6px;line-height:16px;color:#333;left:1801px;letter-spacing:-0.150px;">Average of Di...</div>
<svg style="left:1889px;top:890px;" width="7" height="4" viewBox="0 0 7 4"><path d="M0 0H7L3.5 4Z" fill="#222"/></svg>
<div style="left:1675px;top:990px;width:13px;height:13px;background:#fff;border:1px solid #8e8e8e;"></div>
<div class="t" style="top:989px;font-size:11.6px;line-height:16px;color:#333;left:1694px;">Defer Layout Update</div>
<div style="left:1855px;top:986px;width:51px;height:21px;background:#fdfdfd;"></div>
<div class="t" style="top:989px;font-size:11.4px;line-height:16px;color:#a9c7b3;left:1855.0px;width:51px;text-align:center;letter-spacing:-0.300px;">UPDATE</div>
<div style="left:0px;top:990px;width:1660px;height:29px;background:#e6e6e6;"></div>
<div style="left:0px;top:990px;width:1638px;height:1px;background:#ababab;"></div>
<div style="left:0px;top:1018px;width:1920px;height:1px;background:#c8c8c8;"></div>
<svg style="left:26px;top:999px;" width="5" height="8" viewBox="0 0 5 8"><path d="M5 0V8L0.500 4Z" fill="#217346"/></svg>
<svg style="left:55px;top:999px;" width="5" height="8" viewBox="0 0 5 8"><path d="M0 0V8L4.500 4Z" fill="#c8c8c8"/></svg>
<div class="t" style="top:993px;font-size:13px;line-height:18px;color:#217346;left:79px;font-weight:bold;">...</div>
<div style="left:100px;top:994px;width:1px;height:20px;background:#ababab;"></div>
<div class="t" style="top:995px;font-size:13px;line-height:18px;color:#444;left:91.0px;width:90px;text-align:center;">custmer</div>
<div style="left:177px;top:994px;width:1px;height:20px;background:#ababab;"></div>
<div class="t" style="top:995px;font-size:13px;line-height:18px;color:#444;left:170.0px;width:90px;text-align:center;">Products</div>
<div style="left:255px;top:994px;width:1px;height:20px;background:#ababab;"></div>
<div class="t" style="top:995px;font-size:13px;line-height:18px;color:#444;left:245.0px;width:90px;text-align:center;">Returns</div>
<div style="left:326px;top:994px;width:1px;height:20px;background:#ababab;"></div>
<div class="t" style="top:995px;font-size:13px;line-height:18px;color:#444;left:313.5px;width:90px;text-align:center;">People</div>
<div style="left:392px;top:994px;width:1px;height:20px;background:#ababab;"></div>
<div class="t" style="top:995px;font-size:13px;line-height:18px;color:#444;left:379.0px;width:90px;text-align:center;">Sheet1</div>
<div style="left:457px;top:994px;width:1px;height:20px;background:#ababab;"></div>
<div class="t" style="top:995px;font-size:13px;line-height:18px;color:#444;left:455.5px;width:90px;text-align:center;">new profit</div>
<div style="left:545px;top:990px;width:66px;height:24px;background:#fff;border-left:1px solid #ababab;border-right:1px solid #ababab;"></div>
<div style="left:545px;top:1013px;width:66px;height:2px;background:#217346;"></div>
<div class="t" style="top:995px;font-size:13px;line-height:18px;color:#217346;left:537.0px;width:80px;text-align:center;font-weight:bold;letter-spacing:-0.300px;">Sheet5</div>
<div class="t" style="top:995px;font-size:13px;line-height:18px;color:#444;left:597.5px;width:90px;text-align:center;">Sheet4</div>
<div style="left:674px;top:994px;width:1px;height:20px;background:#ababab;"></div>
<svg style="left:708px;top:996px;" width="16" height="16" viewBox="0 0 16 16"><circle cx="8" cy="8" r="7.200" fill="none" stroke="#666" stroke-width="1"/><path d="M4.500 8H11.500M8 4.500V11.500" stroke="#666" stroke-width="1.400"/></svg>
<div style="left:948px;top:1000px;width:1.5px;height:1.5px;background:#aaa;"></div>
<div style="left:948px;top:1004px;width:1.5px;height:1.5px;background:#aaa;"></div>
<div style="left:948px;top:1008px;width:1.5px;height:1.5px;background:#aaa;"></div>
<div style="left:965px;top:997px;width:673px;height:15px;background:#dcdcdc;"></div>
<div style="left:965px;top:997px;width:15px;height:15px;background:#fff;border:1px solid #ababab;"></div>
<svg style="left:970px;top:1001px;" width="4" height="7" viewBox="0 0 4 7"><path d="M4 0V7L0 3.500Z" fill="#606060"/></svg>
<div style="left:980px;top:997px;width:609px;height:15px;background:#fff;border:1px solid #ababab;"></div>
<div style="left:1623px;top:997px;width:15px;height:15px;background:#fff;border:1px solid #ababab;"></div>
<svg style="left:1629px;top:1001px;" width="4" height="7" viewBox="0 0 4 7"><path d="M0 0V7L4 3.500Z" fill="#606060"/></svg>
<div style="left:0px;top:1019px;width:1920px;height:21px;background:#f1f1f1;"></div>
<div class="t" style="top:1022px;font-size:11px;line-height:14px;color:#444;left:7px;">Ready</div>
<div style="left:1628px;top:1019px;width:38px;height:21px;background:#c6c6c6;"></div>
<svg style="left:1640px;top:1022px;" width="14" height="13" viewBox="0 0 14 13"><path d="M0.500 0.500H13.500V12.500H0.500ZM0.500 4.500H13.500M0.500 8.500H13.500M4.800 0.500V12.500M9.200 0.500V12.500" fill="none" stroke="#555" stroke-width="1"/></svg>
<svg style="left:1678px;top:1022px;" width="14" height="13" viewBox="0 0 14 13"><rect x="0.500" y="0.500" width="13" height="12" fill="none" stroke="#555"/><path d="M4 3.500H10V9.500H4ZM4 5.500H10M4 7.500H10" fill="none" stroke="#555" stroke-width="1"/></svg>
<svg style="left:1716px;top:1022px;" width="14" height="13" viewBox="0 0 14 13"><path d="M0.500 0.500H13.500V12.500H0.500ZM4.500 0.500V6.500M0.500 6.500H9.500V0.500" fill="none" stroke="#555" stroke-width="1"/></svg>
<div style="left:1747px;top:1028px;width:6px;height:2px;background:#555;"></div>
<div style="left:1757px;top:1028px;width:100px;height:1px;background:#a0a0a0;"></div>
<div style="left:1805px;top:1023px;width:4px;height:11px;background:#555;"></div>
<div style="left:1861px;top:1028px;width:8px;height:2px;background:#555;"></div>
<div style="left:1864px;top:1025px;width:2px;height:8px;background:#555;"></div>
<div class="t" style="top:1022px;font-size:11px;line-height:14px;color:#444;left:1871px;width:40px;text-align:right;">100%</div>
<div style="left:1920px;top:0px;width:8px;height:120px;background:#3a3a3d;"></div>
<div style="left:1920px;top:120px;width:8px;height:1px;background:#f07c1e;"></div>
<div style="left:1920px;top:0px;width:8px;height:40px;background:#2e2e30;"></div>
<div style="left:1926px;top:92px;width:4px;height:16px;border:1px solid #e8786a;border-radius:2px;"></div>
<div style="left:0px;top:1040px;width:1920px;height:8px;background:#1c2833;"></div>
<div style="left:48px;top:1040px;width:343px;height:8px;background:#f2f2f2;"></div>
<div style="left:688px;top:1040px;width:48px;height:8px;background:#56606b;"></div>
<div style="left:1915px;top:1040px;width:1px;height:8px;background:#4a545e;"></div>
<div style="left:1790px;top:1040px;width:80px;height:8px;overflow:hidden;"><div class="t" style="top:4.5px;font-size:12px;line-height:14px;color:#fff;left:8px;">11:30:40 PM</div></div>
<div class="t" style="top:965px;font-size:62px;line-height:80px;color:rgba(110,110,110,0.14);left:812.0px;width:300px;text-align:center;font-family:'DejaVu Sans',sans-serif;font-weight:bold;z-index:50;">خمسات</div>
</body></html>
